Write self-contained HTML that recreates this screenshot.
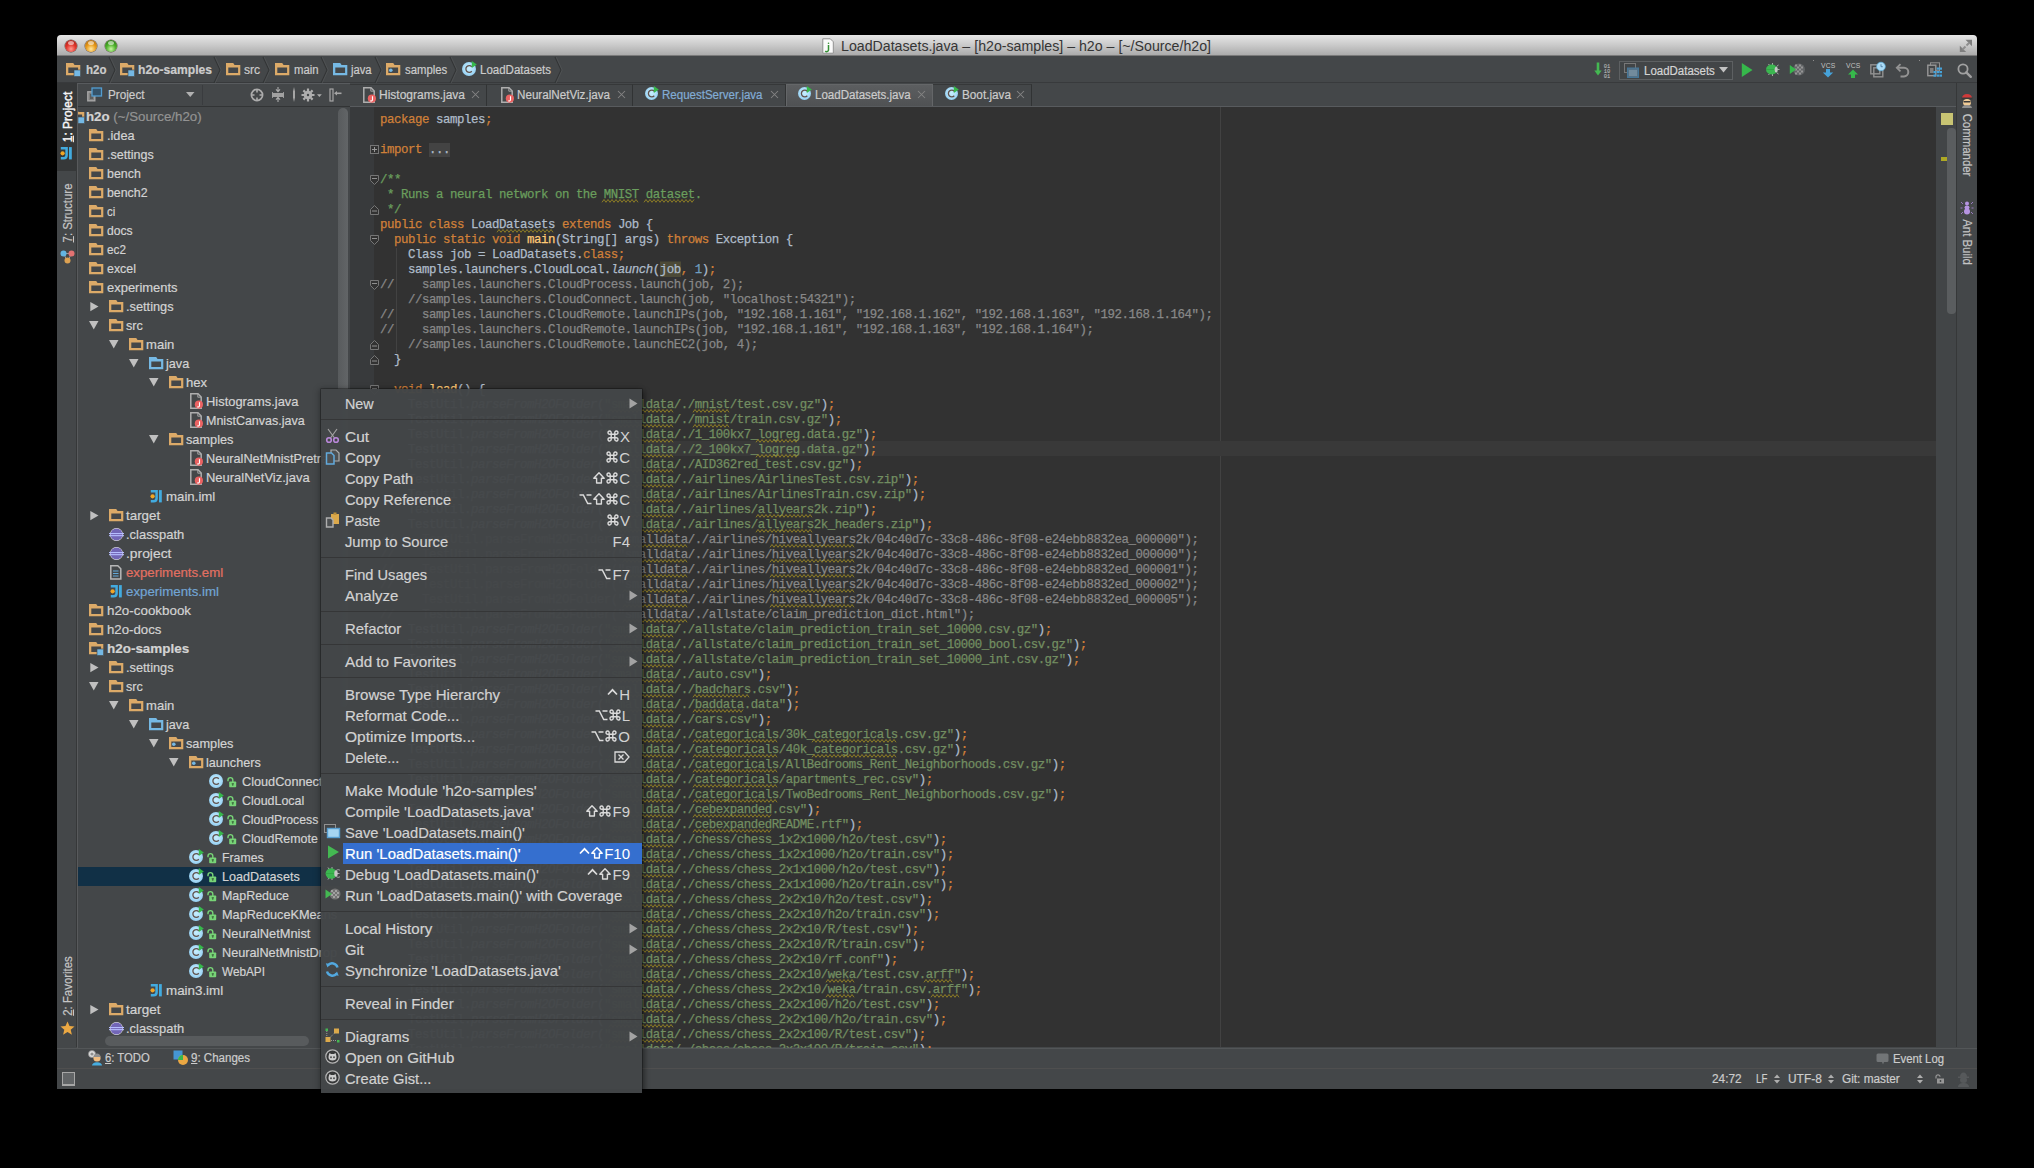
<!DOCTYPE html><html><head><meta charset="utf-8"><style>
*{margin:0;padding:0;box-sizing:border-box}
html,body{width:2034px;height:1168px;background:#000000;overflow:hidden;position:relative;font-family:"Liberation Sans",sans-serif}
.b{position:absolute}
.ic{position:absolute;overflow:visible}
.t{position:absolute;white-space:nowrap;line-height:0;transform-origin:0 50%;-webkit-text-stroke:0.2px currentColor}
.tr{position:absolute;white-space:nowrap;line-height:0;font-size:12.9px;color:#d3d3d3;-webkit-text-stroke:0.2px currentColor}
.mi{position:absolute;white-space:nowrap;line-height:0;font-size:15px;color:#cdcdcd;-webkit-text-stroke:0.2px currentColor}
.clip{position:absolute;overflow:hidden}
.cl{position:absolute;left:0;white-space:pre;font-family:"Liberation Mono",monospace;font-size:12.4px;letter-spacing:-0.44px;line-height:15px;height:15px;color:#afbcca;-webkit-text-stroke:0.25px currentColor}
.k{color:#d08039}.i{color:#afbcca}.s{color:#728e61}.c{color:#888888}.d{color:#6a9e5d}.n{color:#709ec0}.f{color:#ffca75}
.it{font-style:italic}
.hl{background:#4C4A37;box-shadow:0 -1.5px 0 #4C4A37}
.fold{color:#afbcca;background:#434343}
.sq{}
</style></head><body>
<div class="b" style="left:57px;top:35px;width:1920px;height:1054px;background:#444749;border-radius:5px 5px 0 0"></div>
<div class="b" style="left:57px;top:35px;width:1920px;height:21px;background:linear-gradient(#E6E6E6,#CACACA 50%,#ABABAB);border-radius:4px 4px 0 0;border-bottom:1px solid #7A7A7A"></div>
<div class="b" style="left:65px;top:40px;width:12px;height:12px;border-radius:50%;background:radial-gradient(circle at 50% 75%,#FF9A90,#E0342A 45%,#8E1A12 100%);box-shadow:0 0 0 0.5px rgba(40,10,0,0.6)"></div>
<div class="b" style="left:68px;top:41px;width:6px;height:4px;border-radius:50%;background:rgba(255,255,255,0.55)"></div>
<div class="b" style="left:85px;top:40px;width:12px;height:12px;border-radius:50%;background:radial-gradient(circle at 50% 75%,#FFE9A0,#E89A1A 45%,#9A5A08 100%);box-shadow:0 0 0 0.5px rgba(40,10,0,0.6)"></div>
<div class="b" style="left:88px;top:41px;width:6px;height:4px;border-radius:50%;background:rgba(255,255,255,0.55)"></div>
<div class="b" style="left:105px;top:40px;width:12px;height:12px;border-radius:50%;background:radial-gradient(circle at 50% 75%,#C8F7A0,#4CB02A 45%,#22640E 100%);box-shadow:0 0 0 0.5px rgba(40,10,0,0.6)"></div>
<div class="b" style="left:108px;top:41px;width:6px;height:4px;border-radius:50%;background:rgba(255,255,255,0.55)"></div>
<svg class="ic" style="left:822px;top:38px" width="12" height="16" viewBox="0 0 12 16" ><path d="M0.8 0.8h7.5l3 3v11.4H0.8z" fill="#fafafa" stroke="#919191" stroke-width="1"/><path d="M6.5 7v5.2a1.8 1.8 0 0 1-3.2 0.8" fill="none" stroke="#359135" stroke-width="1.5"/><circle cx="6.5" cy="5.2" r="0.8" fill="#359135"/></svg>
<div class="t" style="left:840.5px;top:46px;font-size:14px;font-weight:normal;color:#353535;transform:scaleX(1.0126);-webkit-text-stroke:0">LoadDatasets.java – [h2o-samples] – h2o – [~/Source/h2o]</div>
<svg class="ic" style="left:1959px;top:39px" width="14" height="14" viewBox="0 0 14 14" ><path d="M6.5 0.8H13V7.2z" fill="#7f7f7f"/><path d="M10.5 3.5L7.5 6.5" stroke="#8f8f8f" stroke-width="2"/><path d="M0.8 6.8V13H7.2z" fill="#7f7f7f"/><path d="M3.5 10.5L6.5 7.5" stroke="#8f8f8f" stroke-width="2"/></svg>
<div class="b" style="left:57px;top:56px;width:1920px;height:27px;background:#444749;border-bottom:1px solid #383a3c"></div>
<svg class="ic" style="left:66px;top:63px" width="15" height="14" viewBox="0 0 15 14" ><path fill-rule="evenodd" d="M0 0H7.2L8.6 2H14.3V12.3H0Z M2.3 4.4H12.1V9.9H2.3Z" fill="#DCAA68"/><rect x="8" y="7" width="6.5" height="6.5" fill="#74B8E4" stroke="#444749" stroke-width="0.6"/></svg>
<div class="t" style="left:85.5px;top:70px;font-size:12px;font-weight:bold;color:#cccccc;transform:scaleX(0.9609);">h2o</div>
<svg class="ic" style="left:108px;top:57px" width="9" height="26" viewBox="0 0 9 26" ><path d="M1 0L7 13L1 26" fill="none" stroke="#333536" stroke-width="1.1"/><path d="M2.2 0L8.2 13L2.2 26" fill="none" stroke="#535658" stroke-width="0.7"/></svg>
<svg class="ic" style="left:120px;top:63px" width="15" height="14" viewBox="0 0 15 14" ><path fill-rule="evenodd" d="M0 0H7.2L8.6 2H14.3V12.3H0Z M2.3 4.4H12.1V9.9H2.3Z" fill="#DCAA68"/><rect x="8" y="7" width="6.5" height="6.5" fill="#74B8E4" stroke="#444749" stroke-width="0.6"/></svg>
<div class="t" style="left:138px;top:70px;font-size:12px;font-weight:bold;color:#cccccc;transform:scaleX(1.0087);">h2o-samples</div>
<svg class="ic" style="left:213px;top:57px" width="9" height="26" viewBox="0 0 9 26" ><path d="M1 0L7 13L1 26" fill="none" stroke="#333536" stroke-width="1.1"/><path d="M2.2 0L8.2 13L2.2 26" fill="none" stroke="#535658" stroke-width="0.7"/></svg>
<svg class="ic" style="left:226px;top:63px" width="15" height="14" viewBox="0 0 15 14" ><path fill-rule="evenodd" d="M0 0H7.2L8.6 2H14.3V12.3H0Z M2.3 4.4H12.1V9.9H2.3Z" fill="#DCAA68"/></svg>
<div class="t" style="left:244px;top:70px;font-size:12px;font-weight:normal;color:#cccccc;transform:scaleX(1.0127);">src</div>
<svg class="ic" style="left:262px;top:57px" width="9" height="26" viewBox="0 0 9 26" ><path d="M1 0L7 13L1 26" fill="none" stroke="#333536" stroke-width="1.1"/><path d="M2.2 0L8.2 13L2.2 26" fill="none" stroke="#535658" stroke-width="0.7"/></svg>
<svg class="ic" style="left:275px;top:63px" width="15" height="14" viewBox="0 0 15 14" ><path fill-rule="evenodd" d="M0 0H7.2L8.6 2H14.3V12.3H0Z M2.3 4.4H12.1V9.9H2.3Z" fill="#DCAA68"/></svg>
<div class="t" style="left:293.5px;top:70px;font-size:12px;font-weight:normal;color:#cccccc;transform:scaleX(0.9420);">main</div>
<svg class="ic" style="left:320px;top:57px" width="9" height="26" viewBox="0 0 9 26" ><path d="M1 0L7 13L1 26" fill="none" stroke="#333536" stroke-width="1.1"/><path d="M2.2 0L8.2 13L2.2 26" fill="none" stroke="#535658" stroke-width="0.7"/></svg>
<svg class="ic" style="left:333px;top:63px" width="15" height="14" viewBox="0 0 15 14" ><path fill-rule="evenodd" d="M0 0H7.2L8.6 2H14.3V12.3H0Z M2.3 4.4H12.1V9.9H2.3Z" fill="#76B9E4"/></svg>
<div class="t" style="left:351px;top:70px;font-size:12px;font-weight:normal;color:#cccccc;transform:scaleX(0.9358);">java</div>
<svg class="ic" style="left:374px;top:57px" width="9" height="26" viewBox="0 0 9 26" ><path d="M1 0L7 13L1 26" fill="none" stroke="#333536" stroke-width="1.1"/><path d="M2.2 0L8.2 13L2.2 26" fill="none" stroke="#535658" stroke-width="0.7"/></svg>
<svg class="ic" style="left:386px;top:63px" width="15" height="14" viewBox="0 0 15 14" ><path fill-rule="evenodd" d="M0 0H7.2L8.6 2H14.3V12.3H0Z M2.3 4.4H12.1V9.9H2.3Z" fill="#DCAA68"/><circle cx="4.8" cy="7.2" r="1.8" fill="#74B8E4"/></svg>
<div class="t" style="left:404.7px;top:70px;font-size:12px;font-weight:normal;color:#cccccc;transform:scaleX(0.9467);">samples</div>
<svg class="ic" style="left:449px;top:57px" width="9" height="26" viewBox="0 0 9 26" ><path d="M1 0L7 13L1 26" fill="none" stroke="#333536" stroke-width="1.1"/><path d="M2.2 0L8.2 13L2.2 26" fill="none" stroke="#535658" stroke-width="0.7"/></svg>
<svg class="ic" style="left:462px;top:61px" width="15" height="16" viewBox="0 0 15 16" ><defs><radialGradient id="cg" cx="50%" cy="45%" r="55%"><stop offset="0" stop-color="#c8eeff"/><stop offset="0.6" stop-color="#aedff9"/><stop offset="1" stop-color="#93cef1"/></radialGradient></defs><circle cx="7.0" cy="8.0" r="7.0" fill="url(#cg)"/><path d="M9.8 5.7A3.4 3.4 0 1 0 9.8 10.3" fill="none" stroke="#62524d" stroke-width="1.3"/><path d="M9.8 0 L14.8 3.5 L9.8 7z" fill="#36b84b"/></svg>
<div class="t" style="left:480.4px;top:70px;font-size:12px;font-weight:normal;color:#cccccc;transform:scaleX(0.9588);">LoadDatasets</div>
<svg class="ic" style="left:554px;top:57px" width="9" height="26" viewBox="0 0 9 26" ><path d="M1 0L7 13L1 26" fill="none" stroke="#333536" stroke-width="1.1"/><path d="M2.2 0L8.2 13L2.2 26" fill="none" stroke="#535658" stroke-width="0.7"/></svg>
<svg class="ic" style="left:1594px;top:62px" width="17" height="16" viewBox="0 0 17 16" ><path d="M4 0.5v9" stroke="#44b852" stroke-width="2.6"/><path d="M0.3 8.5h7.4L4 13.5z" fill="#44b852"/><text x="13" y="5.5" font-size="5.5" text-anchor="middle" fill="#c5c5c5" font-family="Liberation Mono">01</text><text x="13" y="10.5" font-size="5.5" text-anchor="middle" fill="#c5c5c5" font-family="Liberation Mono">10</text><text x="13" y="15.5" font-size="5.5" text-anchor="middle" fill="#c5c5c5" font-family="Liberation Mono">01</text></svg>
<div class="b" style="left:1619px;top:61px;width:114px;height:19px;border:1px solid #5d6062;background:#424547"></div>
<svg class="ic" style="left:1624px;top:63px" width="16" height="16" viewBox="0 0 16 16" ><rect x="0.5" y="0.5" width="11" height="9" fill="none" stroke="#787878"/><rect x="3.5" y="5" width="11" height="9.5" fill="#557288" stroke="#467697"/><rect x="5" y="7" width="8" height="6" fill="#728b9d"/></svg>
<div class="t" style="left:1643.5px;top:70.5px;font-size:12px;font-weight:normal;color:#d4d4d4;transform:scaleX(0.9561);">LoadDatasets</div>
<svg class="ic" style="left:1719px;top:67px" width="9" height="6" viewBox="0 0 9 6" ><path d="M0 0h9L4.5 5.5z" fill="#c2c2c2"/></svg>
<svg class="ic" style="left:1741px;top:63px" width="12" height="15" viewBox="0 0 12 15" ><path d="M0.8 0L11.5 7 0.8 14z" fill="#36b84b"/></svg>
<svg class="ic" style="left:1765px;top:62px" width="15" height="15" viewBox="0 0 15 15" ><path d="M3.5 2L5 4M7.5 1v2.5M3.5 13L5 11M7.5 14v-2.5M11.5 4.5l2-1.5M11.5 10.5l2 1.5M12.5 7.5h2" stroke="#b6b6b6" stroke-width="0.9" fill="none"/><ellipse cx="6.8" cy="7.5" rx="5.8" ry="5" fill="#3bb750"/><path d="M1 7.5h10" stroke="#319642" stroke-width="0.6"/><ellipse cx="11.2" cy="7.5" rx="1.6" ry="2.8" fill="#c5c5c5"/></svg>
<svg class="ic" style="left:1789px;top:62px" width="16" height="15" viewBox="0 0 16 15" ><circle cx="10" cy="7.5" r="6" fill="#626567"/><g fill="#959595"><rect x="6" y="2.5" width="2" height="2"/><rect x="10" y="2.5" width="2" height="2"/><rect x="8" y="4.5" width="2" height="2"/><rect x="12" y="4.5" width="2" height="2"/><rect x="6" y="6.5" width="2" height="2"/><rect x="10" y="6.5" width="2" height="2"/><rect x="8" y="8.5" width="2" height="2"/><rect x="12" y="8.5" width="2" height="2"/><rect x="6" y="10.5" width="2" height="2"/><rect x="10" y="10.5" width="2" height="2"/></g><path d="M0.8 3L7 7.5 0.8 12z" fill="#36b84b"/></svg>
<div class="b" style="left:1813px;top:60px;width:1px;height:1px;background:#8f8f8f"></div>
<div class="b" style="left:1919px;top:60px;width:1px;height:1px;background:#8f8f8f"></div>
<svg class="ic" style="left:1820.5px;top:62px" width="15" height="17" viewBox="0 0 15 17" ><text x="7.3" y="6.2" font-size="6.8" text-anchor="middle" fill="#c2c2c2" font-family="Liberation Sans" letter-spacing="0.2">VCS</text><path d="M5 7h4v4H5z M1.8 10.5h10.4L7 15.5z" fill="#46a2d9"/></svg>
<svg class="ic" style="left:1845.5px;top:62px" width="15" height="17" viewBox="0 0 15 17" ><text x="7.3" y="6.2" font-size="6.8" text-anchor="middle" fill="#c2c2c2" font-family="Liberation Sans" letter-spacing="0.2">VCS</text><path d="M2 12.5h10L7 7.5z M5 12.5h4V16H5z" fill="#36b84b"/></svg>
<svg class="ic" style="left:1870px;top:62px" width="16" height="16" viewBox="0 0 16 16" ><rect x="0.8" y="2.8" width="9" height="9" fill="none" stroke="#919191" stroke-width="1.4"/><rect x="3.8" y="5.8" width="9" height="9" fill="none" stroke="#919191" stroke-width="1.4"/><circle cx="11" cy="4.5" r="4.3" fill="#abdbf6" stroke="#62b4e2" stroke-width="0.7"/><path d="M11 2.3v2.4h1.8" stroke="#427297" stroke-width="0.8" fill="none"/></svg>
<svg class="ic" style="left:1896px;top:63px" width="14" height="15" viewBox="0 0 14 15" ><path d="M4.5 1.2L0.8 4.8l3.7 3.6" fill="none" stroke="#939393" stroke-width="1.8"/><path d="M1.5 4.8h6.5a4.3 4.3 0 0 1 0 8.6H4.5" fill="none" stroke="#939393" stroke-width="2"/></svg>
<svg class="ic" style="left:1927px;top:62px" width="15" height="16" viewBox="0 0 15 16" ><rect x="3.5" y="0.8" width="9" height="8" fill="none" stroke="#8f8f8f" stroke-width="1"/><rect x="0.8" y="3.2" width="8" height="10.5" fill="#444749" stroke="#979797" stroke-width="1.4"/><rect x="3" y="6" width="3.5" height="5" fill="#7f7f7f"/><g fill="#46a2d9"><rect x="6.5" y="9" width="2.6" height="2.2"/><rect x="6.5" y="12.5" width="2.6" height="2.2"/><rect x="9.8" y="5.5" width="2.6" height="2.2"/><rect x="9.8" y="9" width="2.6" height="2.2"/><rect x="9.8" y="12.5" width="2.6" height="2.2"/><rect x="12.6" y="5.5" width="2.4" height="2.2"/><rect x="12.6" y="9" width="2.4" height="2.2"/><rect x="12.6" y="12.5" width="2.4" height="2.2"/></g></svg>
<svg class="ic" style="left:1957px;top:63px" width="15" height="15" viewBox="0 0 15 15" ><circle cx="6" cy="6" r="4.6" fill="none" stroke="#a1a1a1" stroke-width="1.8"/><path d="M9.3 9.3l4.5 4.5" stroke="#a1a1a1" stroke-width="2.4" stroke-linecap="round"/></svg>
<div class="b" style="left:57px;top:83px;width:20px;height:964px;background:#444749;border-right:1px solid #363839"></div>
<div class="b" style="left:57px;top:83px;width:20px;height:88px;background:#363839"></div>
<div style="position:absolute;left:67.5px;top:117.3px;transform:translate(-50%,-50%) rotate(-90deg) scaleX(0.98);white-space:nowrap;font-size:12.2px;color:#f5f5f5;line-height:1;-webkit-text-stroke:0.45px currentColor"><u>1</u>: Project</div>
<svg class="ic" style="left:60px;top:147px" width="13" height="13" viewBox="0 0 13 13" ><path d="M0.8 1.3H6.6V8.2Q6.6 11.2 3.6 11.2H0.8" fill="none" stroke="#42abdf" stroke-width="2.5"/><circle cx="2.6" cy="6.3" r="2.1" fill="#f1a626"/><rect x="9" y="0.1" width="2.8" height="12.3" fill="#42abdf"/></svg>
<div style="position:absolute;left:67.5px;top:212.5px;transform:translate(-50%,-50%) rotate(-90deg) scaleX(0.95);white-space:nowrap;font-size:12px;color:#c5c5c5;line-height:1;-webkit-text-stroke:0.2px currentColor"><u>7</u>: Structure</div>
<svg class="ic" style="left:60px;top:249px" width="15" height="15" viewBox="0 0 15 15" ><path d="M3.5 4.5L7.5 12.5L11.5 4.5z" fill="none" stroke="#a1a1a1" stroke-width="0.9"/><circle cx="3.5" cy="4.5" r="3" fill="#62b4e2"/><circle cx="11.5" cy="4.5" r="3" fill="#e27272"/><circle cx="7.5" cy="11.5" r="3" fill="#dca152"/></svg>
<div style="position:absolute;left:67.5px;top:986px;transform:translate(-50%,-50%) rotate(-90deg) scaleX(0.95);white-space:nowrap;font-size:12px;color:#c5c5c5;line-height:1;-webkit-text-stroke:0.2px currentColor"><u>2</u>: Favorites</div>
<svg class="ic" style="left:60px;top:1021px" width="15" height="15" viewBox="0 0 15 15" ><path d="M7.5 0.5l2 4.6 5 .4-3.8 3.3 1.2 4.9-4.4-2.6-4.4 2.6 1.2-4.9L0.5 5.5l5-.4z" fill="#eba843"/></svg>
<div class="b" style="left:77px;top:83px;width:273px;height:24px;background:#444749;border-bottom:1px solid #323435"></div>
<div class="b" style="left:77px;top:107px;width:263px;height:940px;background:#444749"></div>
<div class="t" style="left:107.5px;top:95px;font-size:12px;font-weight:normal;color:#cccccc;transform:scaleX(0.9773);">Project</div>
<svg class="ic" style="left:87px;top:87px" width="15" height="15" viewBox="0 0 15 15" ><rect x="0.8" y="4.8" width="7" height="9" fill="#7f7f7f" stroke="#a6a6a6" stroke-width="1.4"/><rect x="3" y="7" width="3" height="5" fill="#5d5d5d"/><rect x="5" y="1" width="9.5" height="8" fill="#35536a" stroke="#539dd0" stroke-width="1.3"/></svg>
<svg class="ic" style="left:186px;top:92px" width="9" height="6" viewBox="0 0 9 6" ><path d="M0 0h8.5l-4.25 5z" fill="#b1b1b1"/></svg>
<div class="b" style="left:202px;top:85px;width:1px;height:20px;background:#3a3c3f"></div>
<div class="b" style="left:77px;top:83px;width:273px;height:1px;background:#585b5e"></div>
<svg class="ic" style="left:250px;top:88px" width="14" height="14" viewBox="0 0 14 14" ><circle cx="7" cy="7" r="5.6" fill="none" stroke="#acacac" stroke-width="1.7"/><path d="M7 1.5v3M7 9.5v3M1.5 7h3M9.5 7h3" stroke="#acacac" stroke-width="1.6"/></svg>
<svg class="ic" style="left:272px;top:87px" width="13" height="15" viewBox="0 0 13 15" ><rect x="0.5" y="6" width="11" height="4" fill="#a1a1a1"/><path d="M0.5 5v6M11.5 5v6" stroke="#acacac" stroke-width="0.8"/><path d="M6 0v4M4 2.3L6 4.6 8 2.3M6 15v-4M4 12.7L6 10.4 8 12.7" stroke="#acacac" stroke-width="1.1" fill="none"/></svg>
<div class="b" style="left:293px;top:87px;width:2px;height:15px;background:linear-gradient(#444749,#a6a6a6 30%,#a6a6a6 70%,#444749)"></div>
<svg class="ic" style="left:301px;top:88px" width="22" height="14" viewBox="0 0 22 14" ><path d="M7 0.5v2.5M7 11v2.5M0.5 7h2.5M11 7h2.5M2.4 2.4l1.8 1.8M9.8 9.8l1.8 1.8M2.4 11.6l1.8-1.8M9.8 4.2l1.8-1.8" stroke="#aeaeae" stroke-width="2.2"/><circle cx="7" cy="7" r="4.3" fill="#aeaeae"/><circle cx="7" cy="7" r="1.2" fill="#444749"/><path d="M16 6.3h4.8l-2.4 2.6z" fill="#aeaeae"/></svg>
<svg class="ic" style="left:329px;top:88px" width="14" height="14" viewBox="0 0 14 14" ><rect x="1" y="1" width="3" height="12" fill="none" stroke="#a6a6a6" stroke-width="1.2"/><path d="M5 5.3l3-2.2v4.4z" fill="#a6a6a6"/><path d="M7.5 5.3h5" stroke="#a6a6a6" stroke-width="1.6"/></svg>
<div class="b" style="left:336px;top:107px;width:14px;height:940px;background:#444749"></div>
<div class="b" style="left:337.5px;top:108px;width:10.5px;height:600px;background:linear-gradient(90deg,#585b5d,#626567);border-radius:5px"></div>
<div class="clip" style="left:77px;top:107px;width:263px;height:940px">
<div class="b" style="left:1px;top:759.5px;width:262px;height:19px;background:#113046"></div>
<div class="b" style="left:-77px;top:-107px;width:2034px;height:1168px">
<svg class="ic" style="left:69.7px;top:110px" width="15" height="14" viewBox="0 0 15 14" ><path fill-rule="evenodd" d="M0 0H7.2L8.6 2H14.3V12.3H0Z M2.3 4.4H12.1V9.9H2.3Z" fill="#DCAA68"/><rect x="8" y="7" width="6.5" height="6.5" fill="#74B8E4" stroke="#444749" stroke-width="0.6"/></svg>
<div class="tr" style="left:86px;top:117px;transform:scaleX(1.0310);transform-origin:0 50%;"><b>h2o</b> <span style="color:#939393">(~/Source/h2o)</span></div>
<svg class="ic" style="left:88.7px;top:129px" width="15" height="14" viewBox="0 0 15 14" ><path fill-rule="evenodd" d="M0 0H7.2L8.6 2H14.3V12.3H0Z M2.3 4.4H12.1V9.9H2.3Z" fill="#DCAA68"/></svg>
<div class="tr" style="left:107px;top:136px;transform:scaleX(0.9874);transform-origin:0 50%;">.idea</div>
<svg class="ic" style="left:88.7px;top:148px" width="15" height="14" viewBox="0 0 15 14" ><path fill-rule="evenodd" d="M0 0H7.2L8.6 2H14.3V12.3H0Z M2.3 4.4H12.1V9.9H2.3Z" fill="#DCAA68"/></svg>
<div class="tr" style="left:107px;top:155px;transform:scaleX(0.9728);transform-origin:0 50%;">.settings</div>
<svg class="ic" style="left:88.7px;top:167px" width="15" height="14" viewBox="0 0 15 14" ><path fill-rule="evenodd" d="M0 0H7.2L8.6 2H14.3V12.3H0Z M2.3 4.4H12.1V9.9H2.3Z" fill="#DCAA68"/></svg>
<div class="tr" style="left:107px;top:174px;transform:scaleX(0.9624);transform-origin:0 50%;">bench</div>
<svg class="ic" style="left:88.7px;top:186px" width="15" height="14" viewBox="0 0 15 14" ><path fill-rule="evenodd" d="M0 0H7.2L8.6 2H14.3V12.3H0Z M2.3 4.4H12.1V9.9H2.3Z" fill="#DCAA68"/></svg>
<div class="tr" style="left:107px;top:193px;transform:scaleX(0.9576);transform-origin:0 50%;">bench2</div>
<svg class="ic" style="left:88.7px;top:205px" width="15" height="14" viewBox="0 0 15 14" ><path fill-rule="evenodd" d="M0 0H7.2L8.6 2H14.3V12.3H0Z M2.3 4.4H12.1V9.9H2.3Z" fill="#DCAA68"/></svg>
<div class="tr" style="left:107px;top:212px;transform:scaleX(0.8916);transform-origin:0 50%;">ci</div>
<svg class="ic" style="left:88.7px;top:224px" width="15" height="14" viewBox="0 0 15 14" ><path fill-rule="evenodd" d="M0 0H7.2L8.6 2H14.3V12.3H0Z M2.3 4.4H12.1V9.9H2.3Z" fill="#DCAA68"/></svg>
<div class="tr" style="left:107px;top:231px;transform:scaleX(0.9402);transform-origin:0 50%;">docs</div>
<svg class="ic" style="left:88.7px;top:243px" width="15" height="14" viewBox="0 0 15 14" ><path fill-rule="evenodd" d="M0 0H7.2L8.6 2H14.3V12.3H0Z M2.3 4.4H12.1V9.9H2.3Z" fill="#DCAA68"/></svg>
<div class="tr" style="left:107px;top:250px;transform:scaleX(0.9094);transform-origin:0 50%;">ec2</div>
<svg class="ic" style="left:88.7px;top:262px" width="15" height="14" viewBox="0 0 15 14" ><path fill-rule="evenodd" d="M0 0H7.2L8.6 2H14.3V12.3H0Z M2.3 4.4H12.1V9.9H2.3Z" fill="#DCAA68"/></svg>
<div class="tr" style="left:107px;top:269px;transform:scaleX(0.9604);transform-origin:0 50%;">excel</div>
<svg class="ic" style="left:88.7px;top:281px" width="15" height="14" viewBox="0 0 15 14" ><path fill-rule="evenodd" d="M0 0H7.2L8.6 2H14.3V12.3H0Z M2.3 4.4H12.1V9.9H2.3Z" fill="#DCAA68"/></svg>
<div class="tr" style="left:107px;top:288px;transform:scaleX(1.0055);transform-origin:0 50%;">experiments</div>
<svg class="ic" style="left:89.7px;top:302px" width="9" height="10" viewBox="0 0 9 10" ><path d="M0.3 0L8.5 4.6L0.3 9.3z" fill="#C0C0C0"/></svg>
<svg class="ic" style="left:108.7px;top:300px" width="15" height="14" viewBox="0 0 15 14" ><path fill-rule="evenodd" d="M0 0H7.2L8.6 2H14.3V12.3H0Z M2.3 4.4H12.1V9.9H2.3Z" fill="#DCAA68"/></svg>
<div class="tr" style="left:126px;top:307px;transform:scaleX(0.9915);transform-origin:0 50%;">.settings</div>
<svg class="ic" style="left:88.8px;top:321.2px" width="10" height="9" viewBox="0 0 10 9" ><path d="M0 0H9.5L4.75 8.5z" fill="#C0C0C0"/></svg>
<svg class="ic" style="left:108.7px;top:319px" width="15" height="14" viewBox="0 0 15 14" ><path fill-rule="evenodd" d="M0 0H7.2L8.6 2H14.3V12.3H0Z M2.3 4.4H12.1V9.9H2.3Z" fill="#DCAA68"/></svg>
<div class="tr" style="left:126px;top:326px;transform:scaleX(0.9777);transform-origin:0 50%;">src</div>
<svg class="ic" style="left:108.8px;top:340.2px" width="10" height="9" viewBox="0 0 10 9" ><path d="M0 0H9.5L4.75 8.5z" fill="#C0C0C0"/></svg>
<svg class="ic" style="left:128.7px;top:338px" width="15" height="14" viewBox="0 0 15 14" ><path fill-rule="evenodd" d="M0 0H7.2L8.6 2H14.3V12.3H0Z M2.3 4.4H12.1V9.9H2.3Z" fill="#DCAA68"/></svg>
<div class="tr" style="left:146px;top:345px;transform:scaleX(1.0129);transform-origin:0 50%;">main</div>
<svg class="ic" style="left:128.8px;top:359.2px" width="10" height="9" viewBox="0 0 10 9" ><path d="M0 0H9.5L4.75 8.5z" fill="#C0C0C0"/></svg>
<svg class="ic" style="left:148.7px;top:357px" width="15" height="14" viewBox="0 0 15 14" ><path fill-rule="evenodd" d="M0 0H7.2L8.6 2H14.3V12.3H0Z M2.3 4.4H12.1V9.9H2.3Z" fill="#76B9E4"/></svg>
<div class="tr" style="left:166px;top:364px;transform:scaleX(0.9811);transform-origin:0 50%;">java</div>
<svg class="ic" style="left:148.8px;top:378.2px" width="10" height="9" viewBox="0 0 10 9" ><path d="M0 0H9.5L4.75 8.5z" fill="#C0C0C0"/></svg>
<svg class="ic" style="left:168.7px;top:376px" width="15" height="14" viewBox="0 0 15 14" ><path fill-rule="evenodd" d="M0 0H7.2L8.6 2H14.3V12.3H0Z M2.3 4.4H12.1V9.9H2.3Z" fill="#DCAA68"/></svg>
<div class="tr" style="left:186px;top:383px;transform:scaleX(1.0152);transform-origin:0 50%;">hex</div>
<svg class="ic" style="left:190px;top:393px" width="14" height="16" viewBox="0 0 14 16" ><path d="M0.8 0.8h7.2l3.2 3.2V15.2H0.8z" fill="none" stroke="#aeaeae" stroke-width="1.5"/><path d="M7.8 0.8v3.4h3.4" fill="none" stroke="#aeaeae" stroke-width="0.9"/><circle cx="8.9" cy="11.6" r="4.1" fill="#ea6262"/><path d="M9.5 9.2v3.6a1.3 1.3 0 0 1-2.2 0.8" fill="none" stroke="#ffffff" stroke-width="1.1"/></svg>
<div class="tr" style="left:206px;top:402px;transform:scaleX(1.0009);transform-origin:0 50%;">Histograms.java</div>
<svg class="ic" style="left:190px;top:412px" width="14" height="16" viewBox="0 0 14 16" ><path d="M0.8 0.8h7.2l3.2 3.2V15.2H0.8z" fill="none" stroke="#aeaeae" stroke-width="1.5"/><path d="M7.8 0.8v3.4h3.4" fill="none" stroke="#aeaeae" stroke-width="0.9"/><circle cx="8.9" cy="11.6" r="4.1" fill="#ea6262"/><path d="M9.5 9.2v3.6a1.3 1.3 0 0 1-2.2 0.8" fill="none" stroke="#ffffff" stroke-width="1.1"/></svg>
<div class="tr" style="left:206px;top:421px;transform:scaleX(0.9702);transform-origin:0 50%;">MnistCanvas.java</div>
<svg class="ic" style="left:148.8px;top:435.2px" width="10" height="9" viewBox="0 0 10 9" ><path d="M0 0H9.5L4.75 8.5z" fill="#C0C0C0"/></svg>
<svg class="ic" style="left:168.7px;top:433px" width="15" height="14" viewBox="0 0 15 14" ><path fill-rule="evenodd" d="M0 0H7.2L8.6 2H14.3V12.3H0Z M2.3 4.4H12.1V9.9H2.3Z" fill="#DCAA68"/></svg>
<div class="tr" style="left:186px;top:440px;transform:scaleX(0.9875);transform-origin:0 50%;">samples</div>
<svg class="ic" style="left:190px;top:450px" width="14" height="16" viewBox="0 0 14 16" ><path d="M0.8 0.8h7.2l3.2 3.2V15.2H0.8z" fill="none" stroke="#aeaeae" stroke-width="1.5"/><path d="M7.8 0.8v3.4h3.4" fill="none" stroke="#aeaeae" stroke-width="0.9"/><circle cx="8.9" cy="11.6" r="4.1" fill="#ea6262"/><path d="M9.5 9.2v3.6a1.3 1.3 0 0 1-2.2 0.8" fill="none" stroke="#ffffff" stroke-width="1.1"/></svg>
<div class="tr" style="left:206px;top:459px;transform:scaleX(0.9850);transform-origin:0 50%;">NeuralNetMnistPretrain.java</div>
<svg class="ic" style="left:190px;top:469px" width="14" height="16" viewBox="0 0 14 16" ><path d="M0.8 0.8h7.2l3.2 3.2V15.2H0.8z" fill="none" stroke="#aeaeae" stroke-width="1.5"/><path d="M7.8 0.8v3.4h3.4" fill="none" stroke="#aeaeae" stroke-width="0.9"/><circle cx="8.9" cy="11.6" r="4.1" fill="#ea6262"/><path d="M9.5 9.2v3.6a1.3 1.3 0 0 1-2.2 0.8" fill="none" stroke="#ffffff" stroke-width="1.1"/></svg>
<div class="tr" style="left:206px;top:478px;transform:scaleX(1.0064);transform-origin:0 50%;">NeuralNetViz.java</div>
<svg class="ic" style="left:150px;top:490px" width="13" height="13" viewBox="0 0 13 13" ><path d="M0.8 1.3H6.6V8.2Q6.6 11.2 3.6 11.2H0.8" fill="none" stroke="#42abdf" stroke-width="2.5"/><circle cx="2.6" cy="6.3" r="2.1" fill="#f1a626"/><rect x="9" y="0.1" width="2.8" height="12.3" fill="#42abdf"/></svg>
<div class="tr" style="left:166px;top:497px;transform:scaleX(1.0274);transform-origin:0 50%;">main.iml</div>
<svg class="ic" style="left:89.7px;top:511px" width="9" height="10" viewBox="0 0 9 10" ><path d="M0.3 0L8.5 4.6L0.3 9.3z" fill="#C0C0C0"/></svg>
<svg class="ic" style="left:108.7px;top:509px" width="15" height="14" viewBox="0 0 15 14" ><path fill-rule="evenodd" d="M0 0H7.2L8.6 2H14.3V12.3H0Z M2.3 4.4H12.1V9.9H2.3Z" fill="#DCAA68"/></svg>
<div class="tr" style="left:126px;top:516px;transform:scaleX(1.0375);transform-origin:0 50%;">target</div>
<svg class="ic" style="left:108.8px;top:528px" width="15" height="13" viewBox="0 0 15 13" ><circle cx="7.5" cy="6.5" r="6.5" fill="#efefef" /><circle cx="7.5" cy="6.5" r="6" fill="#7266b7"/><rect x="0" y="5" width="15" height="1.1" fill="#b6bdff"/><rect x="0" y="7.1" width="15" height="1.1" fill="#b6bdff"/></svg>
<div class="tr" style="left:126px;top:535px;transform:scaleX(1.0045);transform-origin:0 50%;">.classpath</div>
<svg class="ic" style="left:108.8px;top:547px" width="15" height="13" viewBox="0 0 15 13" ><circle cx="7.5" cy="6.5" r="6.5" fill="#efefef" /><circle cx="7.5" cy="6.5" r="6" fill="#7266b7"/><rect x="0" y="5" width="15" height="1.1" fill="#b6bdff"/><rect x="0" y="7.1" width="15" height="1.1" fill="#b6bdff"/></svg>
<div class="tr" style="left:126px;top:554px;transform:scaleX(1.0740);transform-origin:0 50%;">.project</div>
<svg class="ic" style="left:109.8px;top:565px" width="12" height="15" viewBox="0 0 12 15" ><path d="M0.8 0.8h7l3 3V14H0.8z" fill="none" stroke="#b6b6b6" stroke-width="1.5"/><rect x="3" y="5.5" width="5.5" height="1" fill="#63aad9"/><rect x="3" y="8" width="5.5" height="1" fill="#63aad9"/><rect x="3" y="10.5" width="5.5" height="1" fill="#63aad9"/></svg>
<div class="tr" style="left:126px;top:573px;transform:scaleX(1.0279);transform-origin:0 50%;"><span style="color:#e27062;-webkit-text-stroke-color:#e27062">experiments.eml</span></div>
<svg class="ic" style="left:110px;top:585px" width="13" height="13" viewBox="0 0 13 13" ><path d="M0.8 1.3H6.6V8.2Q6.6 11.2 3.6 11.2H0.8" fill="none" stroke="#42abdf" stroke-width="2.5"/><circle cx="2.6" cy="6.3" r="2.1" fill="#f1a626"/><rect x="9" y="0.1" width="2.8" height="12.3" fill="#42abdf"/></svg>
<div class="tr" style="left:126px;top:592px;transform:scaleX(1.0304);transform-origin:0 50%;"><span style="color:#72a5d4;-webkit-text-stroke-color:#72a5d4">experiments.iml</span></div>
<svg class="ic" style="left:88.7px;top:604px" width="15" height="14" viewBox="0 0 15 14" ><path fill-rule="evenodd" d="M0 0H7.2L8.6 2H14.3V12.3H0Z M2.3 4.4H12.1V9.9H2.3Z" fill="#DCAA68"/></svg>
<div class="tr" style="left:107px;top:611px;transform:scaleX(1.0373);transform-origin:0 50%;">h2o-cookbook</div>
<svg class="ic" style="left:88.7px;top:623px" width="15" height="14" viewBox="0 0 15 14" ><path fill-rule="evenodd" d="M0 0H7.2L8.6 2H14.3V12.3H0Z M2.3 4.4H12.1V9.9H2.3Z" fill="#DCAA68"/></svg>
<div class="tr" style="left:107px;top:630px;transform:scaleX(1.0259);transform-origin:0 50%;">h2o-docs</div>
<svg class="ic" style="left:88.7px;top:642px" width="15" height="14" viewBox="0 0 15 14" ><path fill-rule="evenodd" d="M0 0H7.2L8.6 2H14.3V12.3H0Z M2.3 4.4H12.1V9.9H2.3Z" fill="#DCAA68"/><rect x="8" y="7" width="6.5" height="6.5" fill="#74B8E4" stroke="#444749" stroke-width="0.6"/></svg>
<div class="tr" style="left:107px;top:649px;transform:scaleX(1.0431);transform-origin:0 50%;"><b>h2o-samples</b></div>
<svg class="ic" style="left:89.7px;top:663px" width="9" height="10" viewBox="0 0 9 10" ><path d="M0.3 0L8.5 4.6L0.3 9.3z" fill="#C0C0C0"/></svg>
<svg class="ic" style="left:108.7px;top:661px" width="15" height="14" viewBox="0 0 15 14" ><path fill-rule="evenodd" d="M0 0H7.2L8.6 2H14.3V12.3H0Z M2.3 4.4H12.1V9.9H2.3Z" fill="#DCAA68"/></svg>
<div class="tr" style="left:126px;top:668px;transform:scaleX(0.9915);transform-origin:0 50%;">.settings</div>
<svg class="ic" style="left:88.8px;top:682.2px" width="10" height="9" viewBox="0 0 10 9" ><path d="M0 0H9.5L4.75 8.5z" fill="#C0C0C0"/></svg>
<svg class="ic" style="left:108.7px;top:680px" width="15" height="14" viewBox="0 0 15 14" ><path fill-rule="evenodd" d="M0 0H7.2L8.6 2H14.3V12.3H0Z M2.3 4.4H12.1V9.9H2.3Z" fill="#DCAA68"/></svg>
<div class="tr" style="left:126px;top:687px;transform:scaleX(0.9777);transform-origin:0 50%;">src</div>
<svg class="ic" style="left:108.8px;top:701.2px" width="10" height="9" viewBox="0 0 10 9" ><path d="M0 0H9.5L4.75 8.5z" fill="#C0C0C0"/></svg>
<svg class="ic" style="left:128.7px;top:699px" width="15" height="14" viewBox="0 0 15 14" ><path fill-rule="evenodd" d="M0 0H7.2L8.6 2H14.3V12.3H0Z M2.3 4.4H12.1V9.9H2.3Z" fill="#DCAA68"/></svg>
<div class="tr" style="left:146px;top:706px;transform:scaleX(1.0129);transform-origin:0 50%;">main</div>
<svg class="ic" style="left:128.8px;top:720.2px" width="10" height="9" viewBox="0 0 10 9" ><path d="M0 0H9.5L4.75 8.5z" fill="#C0C0C0"/></svg>
<svg class="ic" style="left:148.7px;top:718px" width="15" height="14" viewBox="0 0 15 14" ><path fill-rule="evenodd" d="M0 0H7.2L8.6 2H14.3V12.3H0Z M2.3 4.4H12.1V9.9H2.3Z" fill="#76B9E4"/></svg>
<div class="tr" style="left:166px;top:725px;transform:scaleX(0.9811);transform-origin:0 50%;">java</div>
<svg class="ic" style="left:148.8px;top:739.2px" width="10" height="9" viewBox="0 0 10 9" ><path d="M0 0H9.5L4.75 8.5z" fill="#C0C0C0"/></svg>
<svg class="ic" style="left:168.7px;top:737px" width="15" height="14" viewBox="0 0 15 14" ><path fill-rule="evenodd" d="M0 0H7.2L8.6 2H14.3V12.3H0Z M2.3 4.4H12.1V9.9H2.3Z" fill="#DCAA68"/><circle cx="4.8" cy="7.2" r="1.8" fill="#74B8E4"/></svg>
<div class="tr" style="left:186px;top:744px;transform:scaleX(0.9875);transform-origin:0 50%;">samples</div>
<svg class="ic" style="left:168.8px;top:758.2px" width="10" height="9" viewBox="0 0 10 9" ><path d="M0 0H9.5L4.75 8.5z" fill="#C0C0C0"/></svg>
<svg class="ic" style="left:188.7px;top:756px" width="15" height="14" viewBox="0 0 15 14" ><path fill-rule="evenodd" d="M0 0H7.2L8.6 2H14.3V12.3H0Z M2.3 4.4H12.1V9.9H2.3Z" fill="#DCAA68"/><circle cx="4.8" cy="7.2" r="1.8" fill="#74B8E4"/></svg>
<div class="tr" style="left:206px;top:763px;transform:scaleX(0.9787);transform-origin:0 50%;">launchers</div>
<svg class="ic" style="left:208.8px;top:773px" width="15" height="16" viewBox="0 0 15 16" ><defs><radialGradient id="cg" cx="50%" cy="45%" r="55%"><stop offset="0" stop-color="#c8eeff"/><stop offset="0.6" stop-color="#aedff9"/><stop offset="1" stop-color="#93cef1"/></radialGradient></defs><circle cx="7.0" cy="8.0" r="7.0" fill="url(#cg)"/><path d="M9.8 5.7A3.4 3.4 0 1 0 9.8 10.3" fill="none" stroke="#62524d" stroke-width="1.3"/></svg>
<svg class="ic" style="left:226.5px;top:776.5px" width="10" height="11" viewBox="0 0 10 11" ><path d="M1 4.2V3a2.4 2.4 0 0 1 4.8 0v2" fill="none" stroke="#77d477" stroke-width="1.4"/><rect x="2.2" y="4.4" width="7" height="5.8" rx="0.8" fill="#77d477"/><path d="M4.7 6.8h2.2M5.8 6.8v2" stroke="#315231" stroke-width="0.9"/></svg>
<div class="tr" style="left:242px;top:782px;transform:scaleX(0.9850);transform-origin:0 50%;">CloudConnect</div>
<svg class="ic" style="left:208.8px;top:792px" width="15" height="16" viewBox="0 0 15 16" ><defs><radialGradient id="cg" cx="50%" cy="45%" r="55%"><stop offset="0" stop-color="#c8eeff"/><stop offset="0.6" stop-color="#aedff9"/><stop offset="1" stop-color="#93cef1"/></radialGradient></defs><circle cx="7.0" cy="8.0" r="7.0" fill="url(#cg)"/><path d="M9.8 5.7A3.4 3.4 0 1 0 9.8 10.3" fill="none" stroke="#62524d" stroke-width="1.3"/><path d="M9.8 0 L14.8 3.5 L9.8 7z" fill="#36b84b"/></svg>
<svg class="ic" style="left:226.5px;top:795.5px" width="10" height="11" viewBox="0 0 10 11" ><path d="M1 4.2V3a2.4 2.4 0 0 1 4.8 0v2" fill="none" stroke="#77d477" stroke-width="1.4"/><rect x="2.2" y="4.4" width="7" height="5.8" rx="0.8" fill="#77d477"/><path d="M4.7 6.8h2.2M5.8 6.8v2" stroke="#315231" stroke-width="0.9"/></svg>
<div class="tr" style="left:242px;top:801px;transform:scaleX(0.9644);transform-origin:0 50%;">CloudLocal</div>
<svg class="ic" style="left:208.8px;top:811px" width="15" height="16" viewBox="0 0 15 16" ><defs><radialGradient id="cg" cx="50%" cy="45%" r="55%"><stop offset="0" stop-color="#c8eeff"/><stop offset="0.6" stop-color="#aedff9"/><stop offset="1" stop-color="#93cef1"/></radialGradient></defs><circle cx="7.0" cy="8.0" r="7.0" fill="url(#cg)"/><path d="M9.8 5.7A3.4 3.4 0 1 0 9.8 10.3" fill="none" stroke="#62524d" stroke-width="1.3"/><path d="M9.8 0 L14.8 3.5 L9.8 7z" fill="#36b84b"/></svg>
<svg class="ic" style="left:226.5px;top:814.5px" width="10" height="11" viewBox="0 0 10 11" ><path d="M1 4.2V3a2.4 2.4 0 0 1 4.8 0v2" fill="none" stroke="#77d477" stroke-width="1.4"/><rect x="2.2" y="4.4" width="7" height="5.8" rx="0.8" fill="#77d477"/><path d="M4.7 6.8h2.2M5.8 6.8v2" stroke="#315231" stroke-width="0.9"/></svg>
<div class="tr" style="left:242px;top:820px;transform:scaleX(0.9508);transform-origin:0 50%;">CloudProcess</div>
<svg class="ic" style="left:208.8px;top:830px" width="15" height="16" viewBox="0 0 15 16" ><defs><radialGradient id="cg" cx="50%" cy="45%" r="55%"><stop offset="0" stop-color="#c8eeff"/><stop offset="0.6" stop-color="#aedff9"/><stop offset="1" stop-color="#93cef1"/></radialGradient></defs><circle cx="7.0" cy="8.0" r="7.0" fill="url(#cg)"/><path d="M9.8 5.7A3.4 3.4 0 1 0 9.8 10.3" fill="none" stroke="#62524d" stroke-width="1.3"/><path d="M9.8 0 L14.8 3.5 L9.8 7z" fill="#36b84b"/></svg>
<svg class="ic" style="left:226.5px;top:833.5px" width="10" height="11" viewBox="0 0 10 11" ><path d="M1 4.2V3a2.4 2.4 0 0 1 4.8 0v2" fill="none" stroke="#77d477" stroke-width="1.4"/><rect x="2.2" y="4.4" width="7" height="5.8" rx="0.8" fill="#77d477"/><path d="M4.7 6.8h2.2M5.8 6.8v2" stroke="#315231" stroke-width="0.9"/></svg>
<div class="tr" style="left:242px;top:839px;transform:scaleX(0.9617);transform-origin:0 50%;">CloudRemote</div>
<svg class="ic" style="left:188.8px;top:849px" width="15" height="16" viewBox="0 0 15 16" ><defs><radialGradient id="cg" cx="50%" cy="45%" r="55%"><stop offset="0" stop-color="#c8eeff"/><stop offset="0.6" stop-color="#aedff9"/><stop offset="1" stop-color="#93cef1"/></radialGradient></defs><circle cx="7.0" cy="8.0" r="7.0" fill="url(#cg)"/><path d="M9.8 5.7A3.4 3.4 0 1 0 9.8 10.3" fill="none" stroke="#62524d" stroke-width="1.3"/><path d="M9.8 0 L14.8 3.5 L9.8 7z" fill="#36b84b"/></svg>
<svg class="ic" style="left:206.5px;top:852.5px" width="10" height="11" viewBox="0 0 10 11" ><path d="M1 4.2V3a2.4 2.4 0 0 1 4.8 0v2" fill="none" stroke="#77d477" stroke-width="1.4"/><rect x="2.2" y="4.4" width="7" height="5.8" rx="0.8" fill="#77d477"/><path d="M4.7 6.8h2.2M5.8 6.8v2" stroke="#315231" stroke-width="0.9"/></svg>
<div class="tr" style="left:222px;top:858px;transform:scaleX(0.9545);transform-origin:0 50%;">Frames</div>
<svg class="ic" style="left:188.8px;top:868px" width="15" height="16" viewBox="0 0 15 16" ><defs><radialGradient id="cg" cx="50%" cy="45%" r="55%"><stop offset="0" stop-color="#c8eeff"/><stop offset="0.6" stop-color="#aedff9"/><stop offset="1" stop-color="#93cef1"/></radialGradient></defs><circle cx="7.0" cy="8.0" r="7.0" fill="url(#cg)"/><path d="M9.8 5.7A3.4 3.4 0 1 0 9.8 10.3" fill="none" stroke="#62524d" stroke-width="1.3"/><path d="M9.8 0 L14.8 3.5 L9.8 7z" fill="#36b84b"/></svg>
<svg class="ic" style="left:206.5px;top:871.5px" width="10" height="11" viewBox="0 0 10 11" ><path d="M1 4.2V3a2.4 2.4 0 0 1 4.8 0v2" fill="none" stroke="#77d477" stroke-width="1.4"/><rect x="2.2" y="4.4" width="7" height="5.8" rx="0.8" fill="#77d477"/><path d="M4.7 6.8h2.2M5.8 6.8v2" stroke="#315231" stroke-width="0.9"/></svg>
<div class="tr" style="left:222px;top:877px;transform:scaleX(0.9768);transform-origin:0 50%;">LoadDatasets</div>
<svg class="ic" style="left:188.8px;top:887px" width="15" height="16" viewBox="0 0 15 16" ><defs><radialGradient id="cg" cx="50%" cy="45%" r="55%"><stop offset="0" stop-color="#c8eeff"/><stop offset="0.6" stop-color="#aedff9"/><stop offset="1" stop-color="#93cef1"/></radialGradient></defs><circle cx="7.0" cy="8.0" r="7.0" fill="url(#cg)"/><path d="M9.8 5.7A3.4 3.4 0 1 0 9.8 10.3" fill="none" stroke="#62524d" stroke-width="1.3"/><path d="M9.8 0 L14.8 3.5 L9.8 7z" fill="#36b84b"/></svg>
<svg class="ic" style="left:206.5px;top:890.5px" width="10" height="11" viewBox="0 0 10 11" ><path d="M1 4.2V3a2.4 2.4 0 0 1 4.8 0v2" fill="none" stroke="#77d477" stroke-width="1.4"/><rect x="2.2" y="4.4" width="7" height="5.8" rx="0.8" fill="#77d477"/><path d="M4.7 6.8h2.2M5.8 6.8v2" stroke="#315231" stroke-width="0.9"/></svg>
<div class="tr" style="left:222px;top:896px;transform:scaleX(0.9639);transform-origin:0 50%;">MapReduce</div>
<svg class="ic" style="left:188.8px;top:906px" width="15" height="16" viewBox="0 0 15 16" ><defs><radialGradient id="cg" cx="50%" cy="45%" r="55%"><stop offset="0" stop-color="#c8eeff"/><stop offset="0.6" stop-color="#aedff9"/><stop offset="1" stop-color="#93cef1"/></radialGradient></defs><circle cx="7.0" cy="8.0" r="7.0" fill="url(#cg)"/><path d="M9.8 5.7A3.4 3.4 0 1 0 9.8 10.3" fill="none" stroke="#62524d" stroke-width="1.3"/><path d="M9.8 0 L14.8 3.5 L9.8 7z" fill="#36b84b"/></svg>
<svg class="ic" style="left:206.5px;top:909.5px" width="10" height="11" viewBox="0 0 10 11" ><path d="M1 4.2V3a2.4 2.4 0 0 1 4.8 0v2" fill="none" stroke="#77d477" stroke-width="1.4"/><rect x="2.2" y="4.4" width="7" height="5.8" rx="0.8" fill="#77d477"/><path d="M4.7 6.8h2.2M5.8 6.8v2" stroke="#315231" stroke-width="0.9"/></svg>
<div class="tr" style="left:222px;top:915px;transform:scaleX(0.9850);transform-origin:0 50%;">MapReduceKMeans</div>
<svg class="ic" style="left:188.8px;top:925px" width="15" height="16" viewBox="0 0 15 16" ><defs><radialGradient id="cg" cx="50%" cy="45%" r="55%"><stop offset="0" stop-color="#c8eeff"/><stop offset="0.6" stop-color="#aedff9"/><stop offset="1" stop-color="#93cef1"/></radialGradient></defs><circle cx="7.0" cy="8.0" r="7.0" fill="url(#cg)"/><path d="M9.8 5.7A3.4 3.4 0 1 0 9.8 10.3" fill="none" stroke="#62524d" stroke-width="1.3"/><path d="M9.8 0 L14.8 3.5 L9.8 7z" fill="#36b84b"/></svg>
<svg class="ic" style="left:206.5px;top:928.5px" width="10" height="11" viewBox="0 0 10 11" ><path d="M1 4.2V3a2.4 2.4 0 0 1 4.8 0v2" fill="none" stroke="#77d477" stroke-width="1.4"/><rect x="2.2" y="4.4" width="7" height="5.8" rx="0.8" fill="#77d477"/><path d="M4.7 6.8h2.2M5.8 6.8v2" stroke="#315231" stroke-width="0.9"/></svg>
<div class="tr" style="left:222px;top:934px;transform:scaleX(0.9951);transform-origin:0 50%;">NeuralNetMnist</div>
<svg class="ic" style="left:188.8px;top:944px" width="15" height="16" viewBox="0 0 15 16" ><defs><radialGradient id="cg" cx="50%" cy="45%" r="55%"><stop offset="0" stop-color="#c8eeff"/><stop offset="0.6" stop-color="#aedff9"/><stop offset="1" stop-color="#93cef1"/></radialGradient></defs><circle cx="7.0" cy="8.0" r="7.0" fill="url(#cg)"/><path d="M9.8 5.7A3.4 3.4 0 1 0 9.8 10.3" fill="none" stroke="#62524d" stroke-width="1.3"/><path d="M9.8 0 L14.8 3.5 L9.8 7z" fill="#36b84b"/></svg>
<svg class="ic" style="left:206.5px;top:947.5px" width="10" height="11" viewBox="0 0 10 11" ><path d="M1 4.2V3a2.4 2.4 0 0 1 4.8 0v2" fill="none" stroke="#77d477" stroke-width="1.4"/><rect x="2.2" y="4.4" width="7" height="5.8" rx="0.8" fill="#77d477"/><path d="M4.7 6.8h2.2M5.8 6.8v2" stroke="#315231" stroke-width="0.9"/></svg>
<div class="tr" style="left:222px;top:953px;transform:scaleX(0.9850);transform-origin:0 50%;">NeuralNetMnistDrop</div>
<svg class="ic" style="left:188.8px;top:963px" width="15" height="16" viewBox="0 0 15 16" ><defs><radialGradient id="cg" cx="50%" cy="45%" r="55%"><stop offset="0" stop-color="#c8eeff"/><stop offset="0.6" stop-color="#aedff9"/><stop offset="1" stop-color="#93cef1"/></radialGradient></defs><circle cx="7.0" cy="8.0" r="7.0" fill="url(#cg)"/><path d="M9.8 5.7A3.4 3.4 0 1 0 9.8 10.3" fill="none" stroke="#62524d" stroke-width="1.3"/><path d="M9.8 0 L14.8 3.5 L9.8 7z" fill="#36b84b"/></svg>
<svg class="ic" style="left:206.5px;top:966.5px" width="10" height="11" viewBox="0 0 10 11" ><path d="M1 4.2V3a2.4 2.4 0 0 1 4.8 0v2" fill="none" stroke="#77d477" stroke-width="1.4"/><rect x="2.2" y="4.4" width="7" height="5.8" rx="0.8" fill="#77d477"/><path d="M4.7 6.8h2.2M5.8 6.8v2" stroke="#315231" stroke-width="0.9"/></svg>
<div class="tr" style="left:222px;top:972px;transform:scaleX(0.9139);transform-origin:0 50%;">WebAPI</div>
<svg class="ic" style="left:150px;top:984px" width="13" height="13" viewBox="0 0 13 13" ><path d="M0.8 1.3H6.6V8.2Q6.6 11.2 3.6 11.2H0.8" fill="none" stroke="#42abdf" stroke-width="2.5"/><circle cx="2.6" cy="6.3" r="2.1" fill="#f1a626"/><rect x="9" y="0.1" width="2.8" height="12.3" fill="#42abdf"/></svg>
<div class="tr" style="left:166px;top:991px;transform:scaleX(1.0370);transform-origin:0 50%;">main3.iml</div>
<svg class="ic" style="left:89.7px;top:1005px" width="9" height="10" viewBox="0 0 9 10" ><path d="M0.3 0L8.5 4.6L0.3 9.3z" fill="#C0C0C0"/></svg>
<svg class="ic" style="left:108.7px;top:1003px" width="15" height="14" viewBox="0 0 15 14" ><path fill-rule="evenodd" d="M0 0H7.2L8.6 2H14.3V12.3H0Z M2.3 4.4H12.1V9.9H2.3Z" fill="#DCAA68"/></svg>
<div class="tr" style="left:126px;top:1010px;transform:scaleX(1.0466);transform-origin:0 50%;">target</div>
<svg class="ic" style="left:108.8px;top:1022px" width="15" height="13" viewBox="0 0 15 13" ><circle cx="7.5" cy="6.5" r="6.5" fill="#efefef" /><circle cx="7.5" cy="6.5" r="6" fill="#7266b7"/><rect x="0" y="5" width="15" height="1.1" fill="#b6bdff"/><rect x="0" y="7.1" width="15" height="1.1" fill="#b6bdff"/></svg>
<div class="tr" style="left:126px;top:1029px;transform:scaleX(1.0028);transform-origin:0 50%;">.classpath</div>
</div>
<div class="b" style="left:28px;top:929px;width:204px;height:10px;background:#585b5d;border-radius:5px"></div>
</div>
<div class="b" style="left:350px;top:83px;width:1606px;height:24px;background:#444749;border-bottom:1px solid #323232"></div>
<div class="b" style="left:350px;top:84px;width:137px;height:22px;background:#444749;border-right:1px solid #313334;border-top:1px solid #363839"></div>
<svg class="ic" style="left:363px;top:87px" width="14" height="16" viewBox="0 0 14 16" ><path d="M0.8 0.8h7.2l3.2 3.2V15.2H0.8z" fill="none" stroke="#aeaeae" stroke-width="1.5"/><path d="M7.8 0.8v3.4h3.4" fill="none" stroke="#aeaeae" stroke-width="0.9"/><circle cx="8.9" cy="11.6" r="4.1" fill="#ea6262"/><path d="M9.5 9.2v3.6a1.3 1.3 0 0 1-2.2 0.8" fill="none" stroke="#ffffff" stroke-width="1.1"/></svg>
<div class="t" style="left:379px;top:95px;font-size:12px;font-weight:normal;color:#cccccc;transform:scaleX(0.9997);">Histograms.java</div>
<svg class="ic" style="left:471px;top:90px" width="9" height="9" viewBox="0 0 9 9" ><path d="M1 1l7 7M8 1L1 8" stroke="#848484" stroke-width="1.05"/></svg>
<div class="b" style="left:487px;top:84px;width:146px;height:22px;background:#444749;border-right:1px solid #313334;border-top:1px solid #363839"></div>
<svg class="ic" style="left:501px;top:87px" width="14" height="16" viewBox="0 0 14 16" ><path d="M0.8 0.8h7.2l3.2 3.2V15.2H0.8z" fill="none" stroke="#aeaeae" stroke-width="1.5"/><path d="M7.8 0.8v3.4h3.4" fill="none" stroke="#aeaeae" stroke-width="0.9"/><circle cx="8.9" cy="11.6" r="4.1" fill="#ea6262"/><path d="M9.5 9.2v3.6a1.3 1.3 0 0 1-2.2 0.8" fill="none" stroke="#ffffff" stroke-width="1.1"/></svg>
<div class="t" style="left:517px;top:95px;font-size:12px;font-weight:normal;color:#cccccc;transform:scaleX(0.9705);">NeuralNetViz.java</div>
<svg class="ic" style="left:617px;top:90px" width="9" height="9" viewBox="0 0 9 9" ><path d="M1 1l7 7M8 1L1 8" stroke="#848484" stroke-width="1.05"/></svg>
<div class="b" style="left:633px;top:84px;width:153px;height:22px;background:#444749;border-right:1px solid #313334;border-top:1px solid #363839"></div>
<svg class="ic" style="left:645px;top:86px" width="14" height="15" viewBox="0 0 14 15" ><defs><radialGradient id="cg" cx="50%" cy="45%" r="55%"><stop offset="0" stop-color="#c8eeff"/><stop offset="0.6" stop-color="#aedff9"/><stop offset="1" stop-color="#93cef1"/></radialGradient></defs><circle cx="6.5" cy="7.5" r="6.5" fill="url(#cg)"/><path d="M9.3 5.2A3.4 3.4 0 1 0 9.3 9.8" fill="none" stroke="#62524d" stroke-width="1.3"/><path d="M8.8 0 L13.8 3.5 L8.8 7z" fill="#36b84b"/></svg>
<div class="t" style="left:662px;top:95px;font-size:12px;font-weight:normal;color:#82acd5;transform:scaleX(0.9597);">RequestServer.java</div>
<svg class="ic" style="left:770px;top:90px" width="9" height="9" viewBox="0 0 9 9" ><path d="M1 1l7 7M8 1L1 8" stroke="#848484" stroke-width="1.05"/></svg>
<div class="b" style="left:786px;top:84px;width:147px;height:23px;background:linear-gradient(#5c5e60,#4f5153);border:1px solid #646668;border-bottom:0"></div>
<svg class="ic" style="left:798px;top:86px" width="14" height="15" viewBox="0 0 14 15" ><defs><radialGradient id="cg" cx="50%" cy="45%" r="55%"><stop offset="0" stop-color="#c8eeff"/><stop offset="0.6" stop-color="#aedff9"/><stop offset="1" stop-color="#93cef1"/></radialGradient></defs><circle cx="6.5" cy="7.5" r="6.5" fill="url(#cg)"/><path d="M9.3 5.2A3.4 3.4 0 1 0 9.3 9.8" fill="none" stroke="#62524d" stroke-width="1.3"/><path d="M8.8 0 L13.8 3.5 L8.8 7z" fill="#36b84b"/></svg>
<div class="t" style="left:815px;top:95px;font-size:12px;font-weight:normal;color:#cccccc;transform:scaleX(0.9628);">LoadDatasets.java</div>
<svg class="ic" style="left:917px;top:90px" width="9" height="9" viewBox="0 0 9 9" ><path d="M1 1l7 7M8 1L1 8" stroke="#848484" stroke-width="1.05"/></svg>
<div class="b" style="left:933px;top:84px;width:99px;height:22px;background:#444749;border-right:1px solid #313334;border-top:1px solid #363839"></div>
<svg class="ic" style="left:945px;top:86px" width="14" height="15" viewBox="0 0 14 15" ><defs><radialGradient id="cg" cx="50%" cy="45%" r="55%"><stop offset="0" stop-color="#c8eeff"/><stop offset="0.6" stop-color="#aedff9"/><stop offset="1" stop-color="#93cef1"/></radialGradient></defs><circle cx="6.5" cy="7.5" r="6.5" fill="url(#cg)"/><path d="M9.3 5.2A3.4 3.4 0 1 0 9.3 9.8" fill="none" stroke="#62524d" stroke-width="1.3"/><path d="M8.8 0 L13.8 3.5 L8.8 7z" fill="#36b84b"/></svg>
<div class="t" style="left:962px;top:95px;font-size:12px;font-weight:normal;color:#cccccc;transform:scaleX(0.9793);">Boot.java</div>
<svg class="ic" style="left:1016px;top:90px" width="9" height="9" viewBox="0 0 9 9" ><path d="M1 1l7 7M8 1L1 8" stroke="#848484" stroke-width="1.05"/></svg>
<div class="b" style="left:350px;top:106px;width:1606px;height:941px;background:#323232;border-top:1px solid #585b5e"></div>
<div class="b" style="left:350px;top:107px;width:24px;height:940px;background:#383a3c"></div>
<div class="b" style="left:1220px;top:107px;width:1px;height:940px;background:#424242"></div>
<div class="b" style="left:374px;top:441px;width:1562px;height:15px;background:#393939"></div>
<div class="b" style="left:396px;top:248px;width:1px;height:105px;background:#424242"></div>
<div class="b" style="left:1936px;top:107px;width:20px;height:940px;background:#424547"></div>
<div class="b" style="left:1941px;top:113px;width:12px;height:12px;background:#c8c473"></div>
<div class="b" style="left:1947px;top:128px;width:9px;height:186px;background:#5a5d5f;border-radius:4px"></div>
<div class="b" style="left:1941px;top:157px;width:6px;height:4px;background:#aea924"></div>
<div class="clip" style="left:380px;top:107px;width:1556px;height:940.5px"><div class="b" style="left:0;top:-107px">
<div class="cl" style="top:112.7px"><span class="k">package</span><span class="i"> samples</span><span class="k">;</span></div>
<div class="cl" style="top:142.7px"><span class="k">import</span><span class="i"> </span><span class="fold">...</span></div>
<div class="cl" style="top:172.7px"><span class="d">/**</span></div>
<div class="cl" style="top:187.7px"><span class="d"> * Runs a neural network on the </span><span class="d sq">MNIST</span><span class="d"> </span><span class="d sq">dataset</span><span class="d">.</span></div>
<div class="cl" style="top:202.7px"><span class="d"> */</span></div>
<div class="cl" style="top:217.7px"><span class="k">public class </span><span class="i">Load</span><span class="i sq">Datasets</span><span class="k"> extends </span><span class="i">Job {</span></div>
<div class="cl" style="top:232.7px"><span class="k">  public static void </span><span class="f">main</span><span class="i">(String[] args) </span><span class="k">throws </span><span class="i">Exception {</span></div>
<div class="cl" style="top:247.7px"><span class="i">    Class job = LoadDatasets.</span><span class="k">class</span><span class="k">;</span></div>
<div class="cl" style="top:262.7px"><span class="i">    samples.launchers.CloudLocal.</span><span class="i it">launch</span><span class="i">(</span><span class="i hl">job</span><span class="k">, </span><span class="n">1</span><span class="i">)</span><span class="k">;</span></div>
<div class="cl" style="top:277.7px"><span class="c">//    samples.launchers.CloudProcess.launch(job, 2);</span></div>
<div class="cl" style="top:292.7px"><span class="c">    //samples.launchers.CloudConnect.launch(job, "localhost:54321");</span></div>
<div class="cl" style="top:307.7px"><span class="c">//    samples.launchers.CloudRemote.launchIPs(job, "192.168.1.161", "192.168.1.162", "192.168.1.163", "192.168.1.164");</span></div>
<div class="cl" style="top:322.7px"><span class="c">//    samples.launchers.CloudRemote.launchIPs(job, "192.168.1.161", "192.168.1.163", "192.168.1.164");</span></div>
<div class="cl" style="top:337.7px"><span class="c">    //samples.launchers.CloudRemote.launchEC2(job, 4);</span></div>
<div class="cl" style="top:352.7px"><span class="i">  }</span></div>
<div class="cl" style="top:382.7px"><span class="k">  void </span><span class="f">load</span><span class="i">() {</span></div>
<div class="cl" style="top:397.7px"><span class="i">    TestUtil.</span><span class="i it">parseFromH2OFolder</span><span class="i">(</span><span class="s">"</span><span class="s sq">smalldata</span><span class="s">/./</span><span class="s sq">mnist</span><span class="s">/test.csv.gz</span><span class="s">"</span><span class="i">)</span><span class="k">;</span></div>
<div class="cl" style="top:412.7px"><span class="i">    TestUtil.</span><span class="i it">parseFromH2OFolder</span><span class="i">(</span><span class="s">"</span><span class="s sq">smalldata</span><span class="s">/./</span><span class="s sq">mnist</span><span class="s">/train.csv.gz</span><span class="s">"</span><span class="i">)</span><span class="k">;</span></div>
<div class="cl" style="top:427.7px"><span class="i">    TestUtil.</span><span class="i it">parseFromH2OFolder</span><span class="i">(</span><span class="s">"</span><span class="s sq">smalldata</span><span class="s">/./</span><span class="s">1_100kx7_</span><span class="s sq">logreg</span><span class="s">.data.gz</span><span class="s">"</span><span class="i">)</span><span class="k">;</span></div>
<div class="cl" style="top:442.7px"><span class="i">    TestUtil.</span><span class="i it">parseFromH2OFolder</span><span class="i">(</span><span class="s">"</span><span class="s sq">smalldata</span><span class="s">/./</span><span class="s">2_100kx7_</span><span class="s sq">logreg</span><span class="s">.data.gz</span><span class="s">"</span><span class="i">)</span><span class="k">;</span></div>
<div class="cl" style="top:457.7px"><span class="i">    TestUtil.</span><span class="i it">parseFromH2OFolder</span><span class="i">(</span><span class="s">"</span><span class="s sq">smalldata</span><span class="s">/./</span><span class="s">AID362red_test.csv.gz</span><span class="s">"</span><span class="i">)</span><span class="k">;</span></div>
<div class="cl" style="top:472.7px"><span class="i">    TestUtil.</span><span class="i it">parseFromH2OFolder</span><span class="i">(</span><span class="s">"</span><span class="s sq">smalldata</span><span class="s">/./</span><span class="s">airlines/AirlinesTest.csv.zip</span><span class="s">"</span><span class="i">)</span><span class="k">;</span></div>
<div class="cl" style="top:487.7px"><span class="i">    TestUtil.</span><span class="i it">parseFromH2OFolder</span><span class="i">(</span><span class="s">"</span><span class="s sq">smalldata</span><span class="s">/./</span><span class="s">airlines/AirlinesTrain.csv.zip</span><span class="s">"</span><span class="i">)</span><span class="k">;</span></div>
<div class="cl" style="top:502.7px"><span class="i">    TestUtil.</span><span class="i it">parseFromH2OFolder</span><span class="i">(</span><span class="s">"</span><span class="s sq">smalldata</span><span class="s">/./</span><span class="s">airlines/</span><span class="s sq">allyears</span><span class="s">2k.zip</span><span class="s">"</span><span class="i">)</span><span class="k">;</span></div>
<div class="cl" style="top:517.7px"><span class="i">    TestUtil.</span><span class="i it">parseFromH2OFolder</span><span class="i">(</span><span class="s">"</span><span class="s sq">smalldata</span><span class="s">/./</span><span class="s">airlines/</span><span class="s sq">allyears</span><span class="s">2k_headers.zip</span><span class="s">"</span><span class="i">)</span><span class="k">;</span></div>
<div class="cl" style="top:532.7px"><span class="c">//    TestUtil.parseFromH2OFolder("</span><span class="c sq">smalldata</span><span class="c">/./</span><span class="c">airlines/</span><span class="c sq">hiveallyears</span><span class="c">2k/04c40d7c-33c8-486c-8f08-e24ebb8832ea_000000</span><span class="c">");</span></div>
<div class="cl" style="top:547.7px"><span class="c">//    TestUtil.parseFromH2OFolder("</span><span class="c sq">smalldata</span><span class="c">/./</span><span class="c">airlines/</span><span class="c sq">hiveallyears</span><span class="c">2k/04c40d7c-33c8-486c-8f08-e24ebb8832ed_000000</span><span class="c">");</span></div>
<div class="cl" style="top:562.7px"><span class="c">//    TestUtil.parseFromH2OFolder("</span><span class="c sq">smalldata</span><span class="c">/./</span><span class="c">airlines/</span><span class="c sq">hiveallyears</span><span class="c">2k/04c40d7c-33c8-486c-8f08-e24ebb8832ed_000001</span><span class="c">");</span></div>
<div class="cl" style="top:577.7px"><span class="c">//    TestUtil.parseFromH2OFolder("</span><span class="c sq">smalldata</span><span class="c">/./</span><span class="c">airlines/</span><span class="c sq">hiveallyears</span><span class="c">2k/04c40d7c-33c8-486c-8f08-e24ebb8832ed_000002</span><span class="c">");</span></div>
<div class="cl" style="top:592.7px"><span class="c">//    TestUtil.parseFromH2OFolder("</span><span class="c sq">smalldata</span><span class="c">/./</span><span class="c">airlines/</span><span class="c sq">hiveallyears</span><span class="c">2k/04c40d7c-33c8-486c-8f08-e24ebb8832ed_000005</span><span class="c">");</span></div>
<div class="cl" style="top:607.7px"><span class="c">//    TestUtil.parseFromH2OFolder("</span><span class="c sq">smalldata</span><span class="c">/./</span><span class="c">allstate/claim_prediction_dict.html</span><span class="c">");</span></div>
<div class="cl" style="top:622.7px"><span class="i">    TestUtil.</span><span class="i it">parseFromH2OFolder</span><span class="i">(</span><span class="s">"</span><span class="s sq">smalldata</span><span class="s">/./</span><span class="s">allstate/claim_prediction_train_set_10000.csv.gz</span><span class="s">"</span><span class="i">)</span><span class="k">;</span></div>
<div class="cl" style="top:637.7px"><span class="i">    TestUtil.</span><span class="i it">parseFromH2OFolder</span><span class="i">(</span><span class="s">"</span><span class="s sq">smalldata</span><span class="s">/./</span><span class="s">allstate/claim_prediction_train_set_10000_bool.csv.gz</span><span class="s">"</span><span class="i">)</span><span class="k">;</span></div>
<div class="cl" style="top:652.7px"><span class="i">    TestUtil.</span><span class="i it">parseFromH2OFolder</span><span class="i">(</span><span class="s">"</span><span class="s sq">smalldata</span><span class="s">/./</span><span class="s">allstate/claim_prediction_train_set_10000_int.csv.gz</span><span class="s">"</span><span class="i">)</span><span class="k">;</span></div>
<div class="cl" style="top:667.7px"><span class="i">    TestUtil.</span><span class="i it">parseFromH2OFolder</span><span class="i">(</span><span class="s">"</span><span class="s sq">smalldata</span><span class="s">/./</span><span class="s">auto.csv</span><span class="s">"</span><span class="i">)</span><span class="k">;</span></div>
<div class="cl" style="top:682.7px"><span class="i">    TestUtil.</span><span class="i it">parseFromH2OFolder</span><span class="i">(</span><span class="s">"</span><span class="s sq">smalldata</span><span class="s">/./</span><span class="s sq">badchars</span><span class="s">.csv</span><span class="s">"</span><span class="i">)</span><span class="k">;</span></div>
<div class="cl" style="top:697.7px"><span class="i">    TestUtil.</span><span class="i it">parseFromH2OFolder</span><span class="i">(</span><span class="s">"</span><span class="s sq">smalldata</span><span class="s">/./</span><span class="s sq">baddata</span><span class="s">.data</span><span class="s">"</span><span class="i">)</span><span class="k">;</span></div>
<div class="cl" style="top:712.7px"><span class="i">    TestUtil.</span><span class="i it">parseFromH2OFolder</span><span class="i">(</span><span class="s">"</span><span class="s sq">smalldata</span><span class="s">/./</span><span class="s">cars.csv</span><span class="s">"</span><span class="i">)</span><span class="k">;</span></div>
<div class="cl" style="top:727.7px"><span class="i">    TestUtil.</span><span class="i it">parseFromH2OFolder</span><span class="i">(</span><span class="s">"</span><span class="s sq">smalldata</span><span class="s">/./</span><span class="s sq">categoricals</span><span class="s">/30k_</span><span class="s sq">categoricals</span><span class="s">.csv.gz</span><span class="s">"</span><span class="i">)</span><span class="k">;</span></div>
<div class="cl" style="top:742.7px"><span class="i">    TestUtil.</span><span class="i it">parseFromH2OFolder</span><span class="i">(</span><span class="s">"</span><span class="s sq">smalldata</span><span class="s">/./</span><span class="s sq">categoricals</span><span class="s">/40k_</span><span class="s sq">categoricals</span><span class="s">.csv.gz</span><span class="s">"</span><span class="i">)</span><span class="k">;</span></div>
<div class="cl" style="top:757.7px"><span class="i">    TestUtil.</span><span class="i it">parseFromH2OFolder</span><span class="i">(</span><span class="s">"</span><span class="s sq">smalldata</span><span class="s">/./</span><span class="s sq">categoricals</span><span class="s">/AllBedrooms_Rent_Neighborhoods.csv.gz</span><span class="s">"</span><span class="i">)</span><span class="k">;</span></div>
<div class="cl" style="top:772.7px"><span class="i">    TestUtil.</span><span class="i it">parseFromH2OFolder</span><span class="i">(</span><span class="s">"</span><span class="s sq">smalldata</span><span class="s">/./</span><span class="s sq">categoricals</span><span class="s">/apartments_rec.csv</span><span class="s">"</span><span class="i">)</span><span class="k">;</span></div>
<div class="cl" style="top:787.7px"><span class="i">    TestUtil.</span><span class="i it">parseFromH2OFolder</span><span class="i">(</span><span class="s">"</span><span class="s sq">smalldata</span><span class="s">/./</span><span class="s sq">categoricals</span><span class="s">/TwoBedrooms_Rent_Neighborhoods.csv.gz</span><span class="s">"</span><span class="i">)</span><span class="k">;</span></div>
<div class="cl" style="top:802.7px"><span class="i">    TestUtil.</span><span class="i it">parseFromH2OFolder</span><span class="i">(</span><span class="s">"</span><span class="s sq">smalldata</span><span class="s">/./</span><span class="s sq">cebexpanded</span><span class="s">.csv</span><span class="s">"</span><span class="i">)</span><span class="k">;</span></div>
<div class="cl" style="top:817.7px"><span class="i">    TestUtil.</span><span class="i it">parseFromH2OFolder</span><span class="i">(</span><span class="s">"</span><span class="s sq">smalldata</span><span class="s">/./</span><span class="s sq">cebexpanded</span><span class="s">README.rtf</span><span class="s">"</span><span class="i">)</span><span class="k">;</span></div>
<div class="cl" style="top:832.7px"><span class="i">    TestUtil.</span><span class="i it">parseFromH2OFolder</span><span class="i">(</span><span class="s">"</span><span class="s sq">smalldata</span><span class="s">/./</span><span class="s">chess/chess_1x2x1000/h2o/test.csv</span><span class="s">"</span><span class="i">)</span><span class="k">;</span></div>
<div class="cl" style="top:847.7px"><span class="i">    TestUtil.</span><span class="i it">parseFromH2OFolder</span><span class="i">(</span><span class="s">"</span><span class="s sq">smalldata</span><span class="s">/./</span><span class="s">chess/chess_1x2x1000/h2o/train.csv</span><span class="s">"</span><span class="i">)</span><span class="k">;</span></div>
<div class="cl" style="top:862.7px"><span class="i">    TestUtil.</span><span class="i it">parseFromH2OFolder</span><span class="i">(</span><span class="s">"</span><span class="s sq">smalldata</span><span class="s">/./</span><span class="s">chess/chess_2x1x1000/h2o/test.csv</span><span class="s">"</span><span class="i">)</span><span class="k">;</span></div>
<div class="cl" style="top:877.7px"><span class="i">    TestUtil.</span><span class="i it">parseFromH2OFolder</span><span class="i">(</span><span class="s">"</span><span class="s sq">smalldata</span><span class="s">/./</span><span class="s">chess/chess_2x1x1000/h2o/train.csv</span><span class="s">"</span><span class="i">)</span><span class="k">;</span></div>
<div class="cl" style="top:892.7px"><span class="i">    TestUtil.</span><span class="i it">parseFromH2OFolder</span><span class="i">(</span><span class="s">"</span><span class="s sq">smalldata</span><span class="s">/./</span><span class="s">chess/chess_2x2x10/h2o/test.csv</span><span class="s">"</span><span class="i">)</span><span class="k">;</span></div>
<div class="cl" style="top:907.7px"><span class="i">    TestUtil.</span><span class="i it">parseFromH2OFolder</span><span class="i">(</span><span class="s">"</span><span class="s sq">smalldata</span><span class="s">/./</span><span class="s">chess/chess_2x2x10/h2o/train.csv</span><span class="s">"</span><span class="i">)</span><span class="k">;</span></div>
<div class="cl" style="top:922.7px"><span class="i">    TestUtil.</span><span class="i it">parseFromH2OFolder</span><span class="i">(</span><span class="s">"</span><span class="s sq">smalldata</span><span class="s">/./</span><span class="s">chess/chess_2x2x10/R/test.csv</span><span class="s">"</span><span class="i">)</span><span class="k">;</span></div>
<div class="cl" style="top:937.7px"><span class="i">    TestUtil.</span><span class="i it">parseFromH2OFolder</span><span class="i">(</span><span class="s">"</span><span class="s sq">smalldata</span><span class="s">/./</span><span class="s">chess/chess_2x2x10/R/train.csv</span><span class="s">"</span><span class="i">)</span><span class="k">;</span></div>
<div class="cl" style="top:952.7px"><span class="i">    TestUtil.</span><span class="i it">parseFromH2OFolder</span><span class="i">(</span><span class="s">"</span><span class="s sq">smalldata</span><span class="s">/./</span><span class="s">chess/chess_2x2x10/rf.conf</span><span class="s">"</span><span class="i">)</span><span class="k">;</span></div>
<div class="cl" style="top:967.7px"><span class="i">    TestUtil.</span><span class="i it">parseFromH2OFolder</span><span class="i">(</span><span class="s">"</span><span class="s sq">smalldata</span><span class="s">/./</span><span class="s">chess/chess_2x2x10/</span><span class="s sq">weka</span><span class="s">/test.csv.</span><span class="s sq">arff</span><span class="s">"</span><span class="i">)</span><span class="k">;</span></div>
<div class="cl" style="top:982.7px"><span class="i">    TestUtil.</span><span class="i it">parseFromH2OFolder</span><span class="i">(</span><span class="s">"</span><span class="s sq">smalldata</span><span class="s">/./</span><span class="s">chess/chess_2x2x10/</span><span class="s sq">weka</span><span class="s">/train.csv.</span><span class="s sq">arff</span><span class="s">"</span><span class="i">)</span><span class="k">;</span></div>
<div class="cl" style="top:997.7px"><span class="i">    TestUtil.</span><span class="i it">parseFromH2OFolder</span><span class="i">(</span><span class="s">"</span><span class="s sq">smalldata</span><span class="s">/./</span><span class="s">chess/chess_2x2x100/h2o/test.csv</span><span class="s">"</span><span class="i">)</span><span class="k">;</span></div>
<div class="cl" style="top:1012.7px"><span class="i">    TestUtil.</span><span class="i it">parseFromH2OFolder</span><span class="i">(</span><span class="s">"</span><span class="s sq">smalldata</span><span class="s">/./</span><span class="s">chess/chess_2x2x100/h2o/train.csv</span><span class="s">"</span><span class="i">)</span><span class="k">;</span></div>
<div class="cl" style="top:1027.7px"><span class="i">    TestUtil.</span><span class="i it">parseFromH2OFolder</span><span class="i">(</span><span class="s">"</span><span class="s sq">smalldata</span><span class="s">/./</span><span class="s">chess/chess_2x2x100/R/test.csv</span><span class="s">"</span><span class="i">)</span><span class="k">;</span></div>
<div class="cl" style="top:1042.7px"><span class="i">    TestUtil.</span><span class="i it">parseFromH2OFolder</span><span class="i">(</span><span class="s">"</span><span class="s sq">smalldata</span><span class="s">/./</span><span class="s">chess/chess_2x2x100/R/train.csv</span><span class="s">"</span><span class="i">)</span><span class="k">;</span></div>
<svg class="ic" style="left:222.0px;top:198.5px" width="38" height="4"><polyline points="0.0 3.3 2.0 0.5 4.0 3.3 6.0 0.5 8.0 3.3 10.0 0.5 12.0 3.3 14.0 0.5 16.0 3.3 18.0 0.5 20.0 3.3 22.0 0.5 24.0 3.3 26.0 0.5 28.0 3.3 30.0 0.5 32.0 3.3 34.0 0.5 36.0 3.3" fill="none" stroke="#9d8a24" stroke-width="0.85"/></svg>
<svg class="ic" style="left:264.0px;top:198.5px" width="52" height="4"><polyline points="0.0 3.3 2.0 0.5 4.0 3.3 6.0 0.5 8.0 3.3 10.0 0.5 12.0 3.3 14.0 0.5 16.0 3.3 18.0 0.5 20.0 3.3 22.0 0.5 24.0 3.3 26.0 0.5 28.0 3.3 30.0 0.5 32.0 3.3 34.0 0.5 36.0 3.3 38.0 0.5 40.0 3.3 42.0 0.5 44.0 3.3 46.0 0.5 48.0 3.3 50.0 0.5" fill="none" stroke="#9d8a24" stroke-width="0.85"/></svg>
<svg class="ic" style="left:117.0px;top:228.5px" width="60" height="4"><polyline points="0.0 3.3 2.0 0.5 4.0 3.3 6.0 0.5 8.0 3.3 10.0 0.5 12.0 3.3 14.0 0.5 16.0 3.3 18.0 0.5 20.0 3.3 22.0 0.5 24.0 3.3 26.0 0.5 28.0 3.3 30.0 0.5 32.0 3.3 34.0 0.5 36.0 3.3 38.0 0.5 40.0 3.3 42.0 0.5 44.0 3.3 46.0 0.5 48.0 3.3 50.0 0.5 52.0 3.3 54.0 0.5 56.0 3.3" fill="none" stroke="#9d8a24" stroke-width="0.85"/></svg>
<svg class="ic" style="left:229.0px;top:408.5px" width="66" height="4"><polyline points="0.0 3.3 2.0 0.5 4.0 3.3 6.0 0.5 8.0 3.3 10.0 0.5 12.0 3.3 14.0 0.5 16.0 3.3 18.0 0.5 20.0 3.3 22.0 0.5 24.0 3.3 26.0 0.5 28.0 3.3 30.0 0.5 32.0 3.3 34.0 0.5 36.0 3.3 38.0 0.5 40.0 3.3 42.0 0.5 44.0 3.3 46.0 0.5 48.0 3.3 50.0 0.5 52.0 3.3 54.0 0.5 56.0 3.3 58.0 0.5 60.0 3.3 62.0 0.5 64.0 3.3" fill="none" stroke="#9d8a24" stroke-width="0.85"/></svg>
<svg class="ic" style="left:313.0px;top:408.5px" width="38" height="4"><polyline points="0.0 3.3 2.0 0.5 4.0 3.3 6.0 0.5 8.0 3.3 10.0 0.5 12.0 3.3 14.0 0.5 16.0 3.3 18.0 0.5 20.0 3.3 22.0 0.5 24.0 3.3 26.0 0.5 28.0 3.3 30.0 0.5 32.0 3.3 34.0 0.5 36.0 3.3" fill="none" stroke="#9d8a24" stroke-width="0.85"/></svg>
<svg class="ic" style="left:229.0px;top:423.5px" width="66" height="4"><polyline points="0.0 3.3 2.0 0.5 4.0 3.3 6.0 0.5 8.0 3.3 10.0 0.5 12.0 3.3 14.0 0.5 16.0 3.3 18.0 0.5 20.0 3.3 22.0 0.5 24.0 3.3 26.0 0.5 28.0 3.3 30.0 0.5 32.0 3.3 34.0 0.5 36.0 3.3 38.0 0.5 40.0 3.3 42.0 0.5 44.0 3.3 46.0 0.5 48.0 3.3 50.0 0.5 52.0 3.3 54.0 0.5 56.0 3.3 58.0 0.5 60.0 3.3 62.0 0.5 64.0 3.3" fill="none" stroke="#9d8a24" stroke-width="0.85"/></svg>
<svg class="ic" style="left:313.0px;top:423.5px" width="38" height="4"><polyline points="0.0 3.3 2.0 0.5 4.0 3.3 6.0 0.5 8.0 3.3 10.0 0.5 12.0 3.3 14.0 0.5 16.0 3.3 18.0 0.5 20.0 3.3 22.0 0.5 24.0 3.3 26.0 0.5 28.0 3.3 30.0 0.5 32.0 3.3 34.0 0.5 36.0 3.3" fill="none" stroke="#9d8a24" stroke-width="0.85"/></svg>
<svg class="ic" style="left:229.0px;top:438.5px" width="66" height="4"><polyline points="0.0 3.3 2.0 0.5 4.0 3.3 6.0 0.5 8.0 3.3 10.0 0.5 12.0 3.3 14.0 0.5 16.0 3.3 18.0 0.5 20.0 3.3 22.0 0.5 24.0 3.3 26.0 0.5 28.0 3.3 30.0 0.5 32.0 3.3 34.0 0.5 36.0 3.3 38.0 0.5 40.0 3.3 42.0 0.5 44.0 3.3 46.0 0.5 48.0 3.3 50.0 0.5 52.0 3.3 54.0 0.5 56.0 3.3 58.0 0.5 60.0 3.3 62.0 0.5 64.0 3.3" fill="none" stroke="#9d8a24" stroke-width="0.85"/></svg>
<svg class="ic" style="left:376.0px;top:438.5px" width="46" height="4"><polyline points="0.0 3.3 2.0 0.5 4.0 3.3 6.0 0.5 8.0 3.3 10.0 0.5 12.0 3.3 14.0 0.5 16.0 3.3 18.0 0.5 20.0 3.3 22.0 0.5 24.0 3.3 26.0 0.5 28.0 3.3 30.0 0.5 32.0 3.3 34.0 0.5 36.0 3.3 38.0 0.5 40.0 3.3 42.0 0.5" fill="none" stroke="#9d8a24" stroke-width="0.85"/></svg>
<svg class="ic" style="left:229.0px;top:453.5px" width="66" height="4"><polyline points="0.0 3.3 2.0 0.5 4.0 3.3 6.0 0.5 8.0 3.3 10.0 0.5 12.0 3.3 14.0 0.5 16.0 3.3 18.0 0.5 20.0 3.3 22.0 0.5 24.0 3.3 26.0 0.5 28.0 3.3 30.0 0.5 32.0 3.3 34.0 0.5 36.0 3.3 38.0 0.5 40.0 3.3 42.0 0.5 44.0 3.3 46.0 0.5 48.0 3.3 50.0 0.5 52.0 3.3 54.0 0.5 56.0 3.3 58.0 0.5 60.0 3.3 62.0 0.5 64.0 3.3" fill="none" stroke="#9d8a24" stroke-width="0.85"/></svg>
<svg class="ic" style="left:376.0px;top:453.5px" width="46" height="4"><polyline points="0.0 3.3 2.0 0.5 4.0 3.3 6.0 0.5 8.0 3.3 10.0 0.5 12.0 3.3 14.0 0.5 16.0 3.3 18.0 0.5 20.0 3.3 22.0 0.5 24.0 3.3 26.0 0.5 28.0 3.3 30.0 0.5 32.0 3.3 34.0 0.5 36.0 3.3 38.0 0.5 40.0 3.3 42.0 0.5" fill="none" stroke="#9d8a24" stroke-width="0.85"/></svg>
<svg class="ic" style="left:229.0px;top:468.5px" width="66" height="4"><polyline points="0.0 3.3 2.0 0.5 4.0 3.3 6.0 0.5 8.0 3.3 10.0 0.5 12.0 3.3 14.0 0.5 16.0 3.3 18.0 0.5 20.0 3.3 22.0 0.5 24.0 3.3 26.0 0.5 28.0 3.3 30.0 0.5 32.0 3.3 34.0 0.5 36.0 3.3 38.0 0.5 40.0 3.3 42.0 0.5 44.0 3.3 46.0 0.5 48.0 3.3 50.0 0.5 52.0 3.3 54.0 0.5 56.0 3.3 58.0 0.5 60.0 3.3 62.0 0.5 64.0 3.3" fill="none" stroke="#9d8a24" stroke-width="0.85"/></svg>
<svg class="ic" style="left:229.0px;top:483.5px" width="66" height="4"><polyline points="0.0 3.3 2.0 0.5 4.0 3.3 6.0 0.5 8.0 3.3 10.0 0.5 12.0 3.3 14.0 0.5 16.0 3.3 18.0 0.5 20.0 3.3 22.0 0.5 24.0 3.3 26.0 0.5 28.0 3.3 30.0 0.5 32.0 3.3 34.0 0.5 36.0 3.3 38.0 0.5 40.0 3.3 42.0 0.5 44.0 3.3 46.0 0.5 48.0 3.3 50.0 0.5 52.0 3.3 54.0 0.5 56.0 3.3 58.0 0.5 60.0 3.3 62.0 0.5 64.0 3.3" fill="none" stroke="#9d8a24" stroke-width="0.85"/></svg>
<svg class="ic" style="left:229.0px;top:498.5px" width="66" height="4"><polyline points="0.0 3.3 2.0 0.5 4.0 3.3 6.0 0.5 8.0 3.3 10.0 0.5 12.0 3.3 14.0 0.5 16.0 3.3 18.0 0.5 20.0 3.3 22.0 0.5 24.0 3.3 26.0 0.5 28.0 3.3 30.0 0.5 32.0 3.3 34.0 0.5 36.0 3.3 38.0 0.5 40.0 3.3 42.0 0.5 44.0 3.3 46.0 0.5 48.0 3.3 50.0 0.5 52.0 3.3 54.0 0.5 56.0 3.3 58.0 0.5 60.0 3.3 62.0 0.5 64.0 3.3" fill="none" stroke="#9d8a24" stroke-width="0.85"/></svg>
<svg class="ic" style="left:229.0px;top:513.5px" width="66" height="4"><polyline points="0.0 3.3 2.0 0.5 4.0 3.3 6.0 0.5 8.0 3.3 10.0 0.5 12.0 3.3 14.0 0.5 16.0 3.3 18.0 0.5 20.0 3.3 22.0 0.5 24.0 3.3 26.0 0.5 28.0 3.3 30.0 0.5 32.0 3.3 34.0 0.5 36.0 3.3 38.0 0.5 40.0 3.3 42.0 0.5 44.0 3.3 46.0 0.5 48.0 3.3 50.0 0.5 52.0 3.3 54.0 0.5 56.0 3.3 58.0 0.5 60.0 3.3 62.0 0.5 64.0 3.3" fill="none" stroke="#9d8a24" stroke-width="0.85"/></svg>
<svg class="ic" style="left:376.0px;top:513.5px" width="60" height="4"><polyline points="0.0 3.3 2.0 0.5 4.0 3.3 6.0 0.5 8.0 3.3 10.0 0.5 12.0 3.3 14.0 0.5 16.0 3.3 18.0 0.5 20.0 3.3 22.0 0.5 24.0 3.3 26.0 0.5 28.0 3.3 30.0 0.5 32.0 3.3 34.0 0.5 36.0 3.3 38.0 0.5 40.0 3.3 42.0 0.5 44.0 3.3 46.0 0.5 48.0 3.3 50.0 0.5 52.0 3.3 54.0 0.5 56.0 3.3" fill="none" stroke="#9d8a24" stroke-width="0.85"/></svg>
<svg class="ic" style="left:229.0px;top:528.5px" width="66" height="4"><polyline points="0.0 3.3 2.0 0.5 4.0 3.3 6.0 0.5 8.0 3.3 10.0 0.5 12.0 3.3 14.0 0.5 16.0 3.3 18.0 0.5 20.0 3.3 22.0 0.5 24.0 3.3 26.0 0.5 28.0 3.3 30.0 0.5 32.0 3.3 34.0 0.5 36.0 3.3 38.0 0.5 40.0 3.3 42.0 0.5 44.0 3.3 46.0 0.5 48.0 3.3 50.0 0.5 52.0 3.3 54.0 0.5 56.0 3.3 58.0 0.5 60.0 3.3 62.0 0.5 64.0 3.3" fill="none" stroke="#9d8a24" stroke-width="0.85"/></svg>
<svg class="ic" style="left:376.0px;top:528.5px" width="60" height="4"><polyline points="0.0 3.3 2.0 0.5 4.0 3.3 6.0 0.5 8.0 3.3 10.0 0.5 12.0 3.3 14.0 0.5 16.0 3.3 18.0 0.5 20.0 3.3 22.0 0.5 24.0 3.3 26.0 0.5 28.0 3.3 30.0 0.5 32.0 3.3 34.0 0.5 36.0 3.3 38.0 0.5 40.0 3.3 42.0 0.5 44.0 3.3 46.0 0.5 48.0 3.3 50.0 0.5 52.0 3.3 54.0 0.5 56.0 3.3" fill="none" stroke="#9d8a24" stroke-width="0.85"/></svg>
<svg class="ic" style="left:243.0px;top:543.5px" width="66" height="4"><polyline points="0.0 3.3 2.0 0.5 4.0 3.3 6.0 0.5 8.0 3.3 10.0 0.5 12.0 3.3 14.0 0.5 16.0 3.3 18.0 0.5 20.0 3.3 22.0 0.5 24.0 3.3 26.0 0.5 28.0 3.3 30.0 0.5 32.0 3.3 34.0 0.5 36.0 3.3 38.0 0.5 40.0 3.3 42.0 0.5 44.0 3.3 46.0 0.5 48.0 3.3 50.0 0.5 52.0 3.3 54.0 0.5 56.0 3.3 58.0 0.5 60.0 3.3 62.0 0.5 64.0 3.3" fill="none" stroke="#9d8a24" stroke-width="0.85"/></svg>
<svg class="ic" style="left:390.0px;top:543.5px" width="88" height="4"><polyline points="0.0 3.3 2.0 0.5 4.0 3.3 6.0 0.5 8.0 3.3 10.0 0.5 12.0 3.3 14.0 0.5 16.0 3.3 18.0 0.5 20.0 3.3 22.0 0.5 24.0 3.3 26.0 0.5 28.0 3.3 30.0 0.5 32.0 3.3 34.0 0.5 36.0 3.3 38.0 0.5 40.0 3.3 42.0 0.5 44.0 3.3 46.0 0.5 48.0 3.3 50.0 0.5 52.0 3.3 54.0 0.5 56.0 3.3 58.0 0.5 60.0 3.3 62.0 0.5 64.0 3.3 66.0 0.5 68.0 3.3 70.0 0.5 72.0 3.3 74.0 0.5 76.0 3.3 78.0 0.5 80.0 3.3 82.0 0.5 84.0 3.3" fill="none" stroke="#9d8a24" stroke-width="0.85"/></svg>
<svg class="ic" style="left:243.0px;top:558.5px" width="66" height="4"><polyline points="0.0 3.3 2.0 0.5 4.0 3.3 6.0 0.5 8.0 3.3 10.0 0.5 12.0 3.3 14.0 0.5 16.0 3.3 18.0 0.5 20.0 3.3 22.0 0.5 24.0 3.3 26.0 0.5 28.0 3.3 30.0 0.5 32.0 3.3 34.0 0.5 36.0 3.3 38.0 0.5 40.0 3.3 42.0 0.5 44.0 3.3 46.0 0.5 48.0 3.3 50.0 0.5 52.0 3.3 54.0 0.5 56.0 3.3 58.0 0.5 60.0 3.3 62.0 0.5 64.0 3.3" fill="none" stroke="#9d8a24" stroke-width="0.85"/></svg>
<svg class="ic" style="left:390.0px;top:558.5px" width="88" height="4"><polyline points="0.0 3.3 2.0 0.5 4.0 3.3 6.0 0.5 8.0 3.3 10.0 0.5 12.0 3.3 14.0 0.5 16.0 3.3 18.0 0.5 20.0 3.3 22.0 0.5 24.0 3.3 26.0 0.5 28.0 3.3 30.0 0.5 32.0 3.3 34.0 0.5 36.0 3.3 38.0 0.5 40.0 3.3 42.0 0.5 44.0 3.3 46.0 0.5 48.0 3.3 50.0 0.5 52.0 3.3 54.0 0.5 56.0 3.3 58.0 0.5 60.0 3.3 62.0 0.5 64.0 3.3 66.0 0.5 68.0 3.3 70.0 0.5 72.0 3.3 74.0 0.5 76.0 3.3 78.0 0.5 80.0 3.3 82.0 0.5 84.0 3.3" fill="none" stroke="#9d8a24" stroke-width="0.85"/></svg>
<svg class="ic" style="left:243.0px;top:573.5px" width="66" height="4"><polyline points="0.0 3.3 2.0 0.5 4.0 3.3 6.0 0.5 8.0 3.3 10.0 0.5 12.0 3.3 14.0 0.5 16.0 3.3 18.0 0.5 20.0 3.3 22.0 0.5 24.0 3.3 26.0 0.5 28.0 3.3 30.0 0.5 32.0 3.3 34.0 0.5 36.0 3.3 38.0 0.5 40.0 3.3 42.0 0.5 44.0 3.3 46.0 0.5 48.0 3.3 50.0 0.5 52.0 3.3 54.0 0.5 56.0 3.3 58.0 0.5 60.0 3.3 62.0 0.5 64.0 3.3" fill="none" stroke="#9d8a24" stroke-width="0.85"/></svg>
<svg class="ic" style="left:390.0px;top:573.5px" width="88" height="4"><polyline points="0.0 3.3 2.0 0.5 4.0 3.3 6.0 0.5 8.0 3.3 10.0 0.5 12.0 3.3 14.0 0.5 16.0 3.3 18.0 0.5 20.0 3.3 22.0 0.5 24.0 3.3 26.0 0.5 28.0 3.3 30.0 0.5 32.0 3.3 34.0 0.5 36.0 3.3 38.0 0.5 40.0 3.3 42.0 0.5 44.0 3.3 46.0 0.5 48.0 3.3 50.0 0.5 52.0 3.3 54.0 0.5 56.0 3.3 58.0 0.5 60.0 3.3 62.0 0.5 64.0 3.3 66.0 0.5 68.0 3.3 70.0 0.5 72.0 3.3 74.0 0.5 76.0 3.3 78.0 0.5 80.0 3.3 82.0 0.5 84.0 3.3" fill="none" stroke="#9d8a24" stroke-width="0.85"/></svg>
<svg class="ic" style="left:243.0px;top:588.5px" width="66" height="4"><polyline points="0.0 3.3 2.0 0.5 4.0 3.3 6.0 0.5 8.0 3.3 10.0 0.5 12.0 3.3 14.0 0.5 16.0 3.3 18.0 0.5 20.0 3.3 22.0 0.5 24.0 3.3 26.0 0.5 28.0 3.3 30.0 0.5 32.0 3.3 34.0 0.5 36.0 3.3 38.0 0.5 40.0 3.3 42.0 0.5 44.0 3.3 46.0 0.5 48.0 3.3 50.0 0.5 52.0 3.3 54.0 0.5 56.0 3.3 58.0 0.5 60.0 3.3 62.0 0.5 64.0 3.3" fill="none" stroke="#9d8a24" stroke-width="0.85"/></svg>
<svg class="ic" style="left:390.0px;top:588.5px" width="88" height="4"><polyline points="0.0 3.3 2.0 0.5 4.0 3.3 6.0 0.5 8.0 3.3 10.0 0.5 12.0 3.3 14.0 0.5 16.0 3.3 18.0 0.5 20.0 3.3 22.0 0.5 24.0 3.3 26.0 0.5 28.0 3.3 30.0 0.5 32.0 3.3 34.0 0.5 36.0 3.3 38.0 0.5 40.0 3.3 42.0 0.5 44.0 3.3 46.0 0.5 48.0 3.3 50.0 0.5 52.0 3.3 54.0 0.5 56.0 3.3 58.0 0.5 60.0 3.3 62.0 0.5 64.0 3.3 66.0 0.5 68.0 3.3 70.0 0.5 72.0 3.3 74.0 0.5 76.0 3.3 78.0 0.5 80.0 3.3 82.0 0.5 84.0 3.3" fill="none" stroke="#9d8a24" stroke-width="0.85"/></svg>
<svg class="ic" style="left:243.0px;top:603.5px" width="66" height="4"><polyline points="0.0 3.3 2.0 0.5 4.0 3.3 6.0 0.5 8.0 3.3 10.0 0.5 12.0 3.3 14.0 0.5 16.0 3.3 18.0 0.5 20.0 3.3 22.0 0.5 24.0 3.3 26.0 0.5 28.0 3.3 30.0 0.5 32.0 3.3 34.0 0.5 36.0 3.3 38.0 0.5 40.0 3.3 42.0 0.5 44.0 3.3 46.0 0.5 48.0 3.3 50.0 0.5 52.0 3.3 54.0 0.5 56.0 3.3 58.0 0.5 60.0 3.3 62.0 0.5 64.0 3.3" fill="none" stroke="#9d8a24" stroke-width="0.85"/></svg>
<svg class="ic" style="left:390.0px;top:603.5px" width="88" height="4"><polyline points="0.0 3.3 2.0 0.5 4.0 3.3 6.0 0.5 8.0 3.3 10.0 0.5 12.0 3.3 14.0 0.5 16.0 3.3 18.0 0.5 20.0 3.3 22.0 0.5 24.0 3.3 26.0 0.5 28.0 3.3 30.0 0.5 32.0 3.3 34.0 0.5 36.0 3.3 38.0 0.5 40.0 3.3 42.0 0.5 44.0 3.3 46.0 0.5 48.0 3.3 50.0 0.5 52.0 3.3 54.0 0.5 56.0 3.3 58.0 0.5 60.0 3.3 62.0 0.5 64.0 3.3 66.0 0.5 68.0 3.3 70.0 0.5 72.0 3.3 74.0 0.5 76.0 3.3 78.0 0.5 80.0 3.3 82.0 0.5 84.0 3.3" fill="none" stroke="#9d8a24" stroke-width="0.85"/></svg>
<svg class="ic" style="left:243.0px;top:618.5px" width="66" height="4"><polyline points="0.0 3.3 2.0 0.5 4.0 3.3 6.0 0.5 8.0 3.3 10.0 0.5 12.0 3.3 14.0 0.5 16.0 3.3 18.0 0.5 20.0 3.3 22.0 0.5 24.0 3.3 26.0 0.5 28.0 3.3 30.0 0.5 32.0 3.3 34.0 0.5 36.0 3.3 38.0 0.5 40.0 3.3 42.0 0.5 44.0 3.3 46.0 0.5 48.0 3.3 50.0 0.5 52.0 3.3 54.0 0.5 56.0 3.3 58.0 0.5 60.0 3.3 62.0 0.5 64.0 3.3" fill="none" stroke="#9d8a24" stroke-width="0.85"/></svg>
<svg class="ic" style="left:229.0px;top:633.5px" width="66" height="4"><polyline points="0.0 3.3 2.0 0.5 4.0 3.3 6.0 0.5 8.0 3.3 10.0 0.5 12.0 3.3 14.0 0.5 16.0 3.3 18.0 0.5 20.0 3.3 22.0 0.5 24.0 3.3 26.0 0.5 28.0 3.3 30.0 0.5 32.0 3.3 34.0 0.5 36.0 3.3 38.0 0.5 40.0 3.3 42.0 0.5 44.0 3.3 46.0 0.5 48.0 3.3 50.0 0.5 52.0 3.3 54.0 0.5 56.0 3.3 58.0 0.5 60.0 3.3 62.0 0.5 64.0 3.3" fill="none" stroke="#9d8a24" stroke-width="0.85"/></svg>
<svg class="ic" style="left:229.0px;top:648.5px" width="66" height="4"><polyline points="0.0 3.3 2.0 0.5 4.0 3.3 6.0 0.5 8.0 3.3 10.0 0.5 12.0 3.3 14.0 0.5 16.0 3.3 18.0 0.5 20.0 3.3 22.0 0.5 24.0 3.3 26.0 0.5 28.0 3.3 30.0 0.5 32.0 3.3 34.0 0.5 36.0 3.3 38.0 0.5 40.0 3.3 42.0 0.5 44.0 3.3 46.0 0.5 48.0 3.3 50.0 0.5 52.0 3.3 54.0 0.5 56.0 3.3 58.0 0.5 60.0 3.3 62.0 0.5 64.0 3.3" fill="none" stroke="#9d8a24" stroke-width="0.85"/></svg>
<svg class="ic" style="left:229.0px;top:663.5px" width="66" height="4"><polyline points="0.0 3.3 2.0 0.5 4.0 3.3 6.0 0.5 8.0 3.3 10.0 0.5 12.0 3.3 14.0 0.5 16.0 3.3 18.0 0.5 20.0 3.3 22.0 0.5 24.0 3.3 26.0 0.5 28.0 3.3 30.0 0.5 32.0 3.3 34.0 0.5 36.0 3.3 38.0 0.5 40.0 3.3 42.0 0.5 44.0 3.3 46.0 0.5 48.0 3.3 50.0 0.5 52.0 3.3 54.0 0.5 56.0 3.3 58.0 0.5 60.0 3.3 62.0 0.5 64.0 3.3" fill="none" stroke="#9d8a24" stroke-width="0.85"/></svg>
<svg class="ic" style="left:229.0px;top:678.5px" width="66" height="4"><polyline points="0.0 3.3 2.0 0.5 4.0 3.3 6.0 0.5 8.0 3.3 10.0 0.5 12.0 3.3 14.0 0.5 16.0 3.3 18.0 0.5 20.0 3.3 22.0 0.5 24.0 3.3 26.0 0.5 28.0 3.3 30.0 0.5 32.0 3.3 34.0 0.5 36.0 3.3 38.0 0.5 40.0 3.3 42.0 0.5 44.0 3.3 46.0 0.5 48.0 3.3 50.0 0.5 52.0 3.3 54.0 0.5 56.0 3.3 58.0 0.5 60.0 3.3 62.0 0.5 64.0 3.3" fill="none" stroke="#9d8a24" stroke-width="0.85"/></svg>
<svg class="ic" style="left:229.0px;top:693.5px" width="66" height="4"><polyline points="0.0 3.3 2.0 0.5 4.0 3.3 6.0 0.5 8.0 3.3 10.0 0.5 12.0 3.3 14.0 0.5 16.0 3.3 18.0 0.5 20.0 3.3 22.0 0.5 24.0 3.3 26.0 0.5 28.0 3.3 30.0 0.5 32.0 3.3 34.0 0.5 36.0 3.3 38.0 0.5 40.0 3.3 42.0 0.5 44.0 3.3 46.0 0.5 48.0 3.3 50.0 0.5 52.0 3.3 54.0 0.5 56.0 3.3 58.0 0.5 60.0 3.3 62.0 0.5 64.0 3.3" fill="none" stroke="#9d8a24" stroke-width="0.85"/></svg>
<svg class="ic" style="left:313.0px;top:693.5px" width="60" height="4"><polyline points="0.0 3.3 2.0 0.5 4.0 3.3 6.0 0.5 8.0 3.3 10.0 0.5 12.0 3.3 14.0 0.5 16.0 3.3 18.0 0.5 20.0 3.3 22.0 0.5 24.0 3.3 26.0 0.5 28.0 3.3 30.0 0.5 32.0 3.3 34.0 0.5 36.0 3.3 38.0 0.5 40.0 3.3 42.0 0.5 44.0 3.3 46.0 0.5 48.0 3.3 50.0 0.5 52.0 3.3 54.0 0.5 56.0 3.3" fill="none" stroke="#9d8a24" stroke-width="0.85"/></svg>
<svg class="ic" style="left:229.0px;top:708.5px" width="66" height="4"><polyline points="0.0 3.3 2.0 0.5 4.0 3.3 6.0 0.5 8.0 3.3 10.0 0.5 12.0 3.3 14.0 0.5 16.0 3.3 18.0 0.5 20.0 3.3 22.0 0.5 24.0 3.3 26.0 0.5 28.0 3.3 30.0 0.5 32.0 3.3 34.0 0.5 36.0 3.3 38.0 0.5 40.0 3.3 42.0 0.5 44.0 3.3 46.0 0.5 48.0 3.3 50.0 0.5 52.0 3.3 54.0 0.5 56.0 3.3 58.0 0.5 60.0 3.3 62.0 0.5 64.0 3.3" fill="none" stroke="#9d8a24" stroke-width="0.85"/></svg>
<svg class="ic" style="left:313.0px;top:708.5px" width="52" height="4"><polyline points="0.0 3.3 2.0 0.5 4.0 3.3 6.0 0.5 8.0 3.3 10.0 0.5 12.0 3.3 14.0 0.5 16.0 3.3 18.0 0.5 20.0 3.3 22.0 0.5 24.0 3.3 26.0 0.5 28.0 3.3 30.0 0.5 32.0 3.3 34.0 0.5 36.0 3.3 38.0 0.5 40.0 3.3 42.0 0.5 44.0 3.3 46.0 0.5 48.0 3.3 50.0 0.5" fill="none" stroke="#9d8a24" stroke-width="0.85"/></svg>
<svg class="ic" style="left:229.0px;top:723.5px" width="66" height="4"><polyline points="0.0 3.3 2.0 0.5 4.0 3.3 6.0 0.5 8.0 3.3 10.0 0.5 12.0 3.3 14.0 0.5 16.0 3.3 18.0 0.5 20.0 3.3 22.0 0.5 24.0 3.3 26.0 0.5 28.0 3.3 30.0 0.5 32.0 3.3 34.0 0.5 36.0 3.3 38.0 0.5 40.0 3.3 42.0 0.5 44.0 3.3 46.0 0.5 48.0 3.3 50.0 0.5 52.0 3.3 54.0 0.5 56.0 3.3 58.0 0.5 60.0 3.3 62.0 0.5 64.0 3.3" fill="none" stroke="#9d8a24" stroke-width="0.85"/></svg>
<svg class="ic" style="left:229.0px;top:738.5px" width="66" height="4"><polyline points="0.0 3.3 2.0 0.5 4.0 3.3 6.0 0.5 8.0 3.3 10.0 0.5 12.0 3.3 14.0 0.5 16.0 3.3 18.0 0.5 20.0 3.3 22.0 0.5 24.0 3.3 26.0 0.5 28.0 3.3 30.0 0.5 32.0 3.3 34.0 0.5 36.0 3.3 38.0 0.5 40.0 3.3 42.0 0.5 44.0 3.3 46.0 0.5 48.0 3.3 50.0 0.5 52.0 3.3 54.0 0.5 56.0 3.3 58.0 0.5 60.0 3.3 62.0 0.5 64.0 3.3" fill="none" stroke="#9d8a24" stroke-width="0.85"/></svg>
<svg class="ic" style="left:313.0px;top:738.5px" width="88" height="4"><polyline points="0.0 3.3 2.0 0.5 4.0 3.3 6.0 0.5 8.0 3.3 10.0 0.5 12.0 3.3 14.0 0.5 16.0 3.3 18.0 0.5 20.0 3.3 22.0 0.5 24.0 3.3 26.0 0.5 28.0 3.3 30.0 0.5 32.0 3.3 34.0 0.5 36.0 3.3 38.0 0.5 40.0 3.3 42.0 0.5 44.0 3.3 46.0 0.5 48.0 3.3 50.0 0.5 52.0 3.3 54.0 0.5 56.0 3.3 58.0 0.5 60.0 3.3 62.0 0.5 64.0 3.3 66.0 0.5 68.0 3.3 70.0 0.5 72.0 3.3 74.0 0.5 76.0 3.3 78.0 0.5 80.0 3.3 82.0 0.5 84.0 3.3" fill="none" stroke="#9d8a24" stroke-width="0.85"/></svg>
<svg class="ic" style="left:432.0px;top:738.5px" width="88" height="4"><polyline points="0.0 3.3 2.0 0.5 4.0 3.3 6.0 0.5 8.0 3.3 10.0 0.5 12.0 3.3 14.0 0.5 16.0 3.3 18.0 0.5 20.0 3.3 22.0 0.5 24.0 3.3 26.0 0.5 28.0 3.3 30.0 0.5 32.0 3.3 34.0 0.5 36.0 3.3 38.0 0.5 40.0 3.3 42.0 0.5 44.0 3.3 46.0 0.5 48.0 3.3 50.0 0.5 52.0 3.3 54.0 0.5 56.0 3.3 58.0 0.5 60.0 3.3 62.0 0.5 64.0 3.3 66.0 0.5 68.0 3.3 70.0 0.5 72.0 3.3 74.0 0.5 76.0 3.3 78.0 0.5 80.0 3.3 82.0 0.5 84.0 3.3" fill="none" stroke="#9d8a24" stroke-width="0.85"/></svg>
<svg class="ic" style="left:229.0px;top:753.5px" width="66" height="4"><polyline points="0.0 3.3 2.0 0.5 4.0 3.3 6.0 0.5 8.0 3.3 10.0 0.5 12.0 3.3 14.0 0.5 16.0 3.3 18.0 0.5 20.0 3.3 22.0 0.5 24.0 3.3 26.0 0.5 28.0 3.3 30.0 0.5 32.0 3.3 34.0 0.5 36.0 3.3 38.0 0.5 40.0 3.3 42.0 0.5 44.0 3.3 46.0 0.5 48.0 3.3 50.0 0.5 52.0 3.3 54.0 0.5 56.0 3.3 58.0 0.5 60.0 3.3 62.0 0.5 64.0 3.3" fill="none" stroke="#9d8a24" stroke-width="0.85"/></svg>
<svg class="ic" style="left:313.0px;top:753.5px" width="88" height="4"><polyline points="0.0 3.3 2.0 0.5 4.0 3.3 6.0 0.5 8.0 3.3 10.0 0.5 12.0 3.3 14.0 0.5 16.0 3.3 18.0 0.5 20.0 3.3 22.0 0.5 24.0 3.3 26.0 0.5 28.0 3.3 30.0 0.5 32.0 3.3 34.0 0.5 36.0 3.3 38.0 0.5 40.0 3.3 42.0 0.5 44.0 3.3 46.0 0.5 48.0 3.3 50.0 0.5 52.0 3.3 54.0 0.5 56.0 3.3 58.0 0.5 60.0 3.3 62.0 0.5 64.0 3.3 66.0 0.5 68.0 3.3 70.0 0.5 72.0 3.3 74.0 0.5 76.0 3.3 78.0 0.5 80.0 3.3 82.0 0.5 84.0 3.3" fill="none" stroke="#9d8a24" stroke-width="0.85"/></svg>
<svg class="ic" style="left:432.0px;top:753.5px" width="88" height="4"><polyline points="0.0 3.3 2.0 0.5 4.0 3.3 6.0 0.5 8.0 3.3 10.0 0.5 12.0 3.3 14.0 0.5 16.0 3.3 18.0 0.5 20.0 3.3 22.0 0.5 24.0 3.3 26.0 0.5 28.0 3.3 30.0 0.5 32.0 3.3 34.0 0.5 36.0 3.3 38.0 0.5 40.0 3.3 42.0 0.5 44.0 3.3 46.0 0.5 48.0 3.3 50.0 0.5 52.0 3.3 54.0 0.5 56.0 3.3 58.0 0.5 60.0 3.3 62.0 0.5 64.0 3.3 66.0 0.5 68.0 3.3 70.0 0.5 72.0 3.3 74.0 0.5 76.0 3.3 78.0 0.5 80.0 3.3 82.0 0.5 84.0 3.3" fill="none" stroke="#9d8a24" stroke-width="0.85"/></svg>
<svg class="ic" style="left:229.0px;top:768.5px" width="66" height="4"><polyline points="0.0 3.3 2.0 0.5 4.0 3.3 6.0 0.5 8.0 3.3 10.0 0.5 12.0 3.3 14.0 0.5 16.0 3.3 18.0 0.5 20.0 3.3 22.0 0.5 24.0 3.3 26.0 0.5 28.0 3.3 30.0 0.5 32.0 3.3 34.0 0.5 36.0 3.3 38.0 0.5 40.0 3.3 42.0 0.5 44.0 3.3 46.0 0.5 48.0 3.3 50.0 0.5 52.0 3.3 54.0 0.5 56.0 3.3 58.0 0.5 60.0 3.3 62.0 0.5 64.0 3.3" fill="none" stroke="#9d8a24" stroke-width="0.85"/></svg>
<svg class="ic" style="left:313.0px;top:768.5px" width="88" height="4"><polyline points="0.0 3.3 2.0 0.5 4.0 3.3 6.0 0.5 8.0 3.3 10.0 0.5 12.0 3.3 14.0 0.5 16.0 3.3 18.0 0.5 20.0 3.3 22.0 0.5 24.0 3.3 26.0 0.5 28.0 3.3 30.0 0.5 32.0 3.3 34.0 0.5 36.0 3.3 38.0 0.5 40.0 3.3 42.0 0.5 44.0 3.3 46.0 0.5 48.0 3.3 50.0 0.5 52.0 3.3 54.0 0.5 56.0 3.3 58.0 0.5 60.0 3.3 62.0 0.5 64.0 3.3 66.0 0.5 68.0 3.3 70.0 0.5 72.0 3.3 74.0 0.5 76.0 3.3 78.0 0.5 80.0 3.3 82.0 0.5 84.0 3.3" fill="none" stroke="#9d8a24" stroke-width="0.85"/></svg>
<svg class="ic" style="left:229.0px;top:783.5px" width="66" height="4"><polyline points="0.0 3.3 2.0 0.5 4.0 3.3 6.0 0.5 8.0 3.3 10.0 0.5 12.0 3.3 14.0 0.5 16.0 3.3 18.0 0.5 20.0 3.3 22.0 0.5 24.0 3.3 26.0 0.5 28.0 3.3 30.0 0.5 32.0 3.3 34.0 0.5 36.0 3.3 38.0 0.5 40.0 3.3 42.0 0.5 44.0 3.3 46.0 0.5 48.0 3.3 50.0 0.5 52.0 3.3 54.0 0.5 56.0 3.3 58.0 0.5 60.0 3.3 62.0 0.5 64.0 3.3" fill="none" stroke="#9d8a24" stroke-width="0.85"/></svg>
<svg class="ic" style="left:313.0px;top:783.5px" width="88" height="4"><polyline points="0.0 3.3 2.0 0.5 4.0 3.3 6.0 0.5 8.0 3.3 10.0 0.5 12.0 3.3 14.0 0.5 16.0 3.3 18.0 0.5 20.0 3.3 22.0 0.5 24.0 3.3 26.0 0.5 28.0 3.3 30.0 0.5 32.0 3.3 34.0 0.5 36.0 3.3 38.0 0.5 40.0 3.3 42.0 0.5 44.0 3.3 46.0 0.5 48.0 3.3 50.0 0.5 52.0 3.3 54.0 0.5 56.0 3.3 58.0 0.5 60.0 3.3 62.0 0.5 64.0 3.3 66.0 0.5 68.0 3.3 70.0 0.5 72.0 3.3 74.0 0.5 76.0 3.3 78.0 0.5 80.0 3.3 82.0 0.5 84.0 3.3" fill="none" stroke="#9d8a24" stroke-width="0.85"/></svg>
<svg class="ic" style="left:229.0px;top:798.5px" width="66" height="4"><polyline points="0.0 3.3 2.0 0.5 4.0 3.3 6.0 0.5 8.0 3.3 10.0 0.5 12.0 3.3 14.0 0.5 16.0 3.3 18.0 0.5 20.0 3.3 22.0 0.5 24.0 3.3 26.0 0.5 28.0 3.3 30.0 0.5 32.0 3.3 34.0 0.5 36.0 3.3 38.0 0.5 40.0 3.3 42.0 0.5 44.0 3.3 46.0 0.5 48.0 3.3 50.0 0.5 52.0 3.3 54.0 0.5 56.0 3.3 58.0 0.5 60.0 3.3 62.0 0.5 64.0 3.3" fill="none" stroke="#9d8a24" stroke-width="0.85"/></svg>
<svg class="ic" style="left:313.0px;top:798.5px" width="88" height="4"><polyline points="0.0 3.3 2.0 0.5 4.0 3.3 6.0 0.5 8.0 3.3 10.0 0.5 12.0 3.3 14.0 0.5 16.0 3.3 18.0 0.5 20.0 3.3 22.0 0.5 24.0 3.3 26.0 0.5 28.0 3.3 30.0 0.5 32.0 3.3 34.0 0.5 36.0 3.3 38.0 0.5 40.0 3.3 42.0 0.5 44.0 3.3 46.0 0.5 48.0 3.3 50.0 0.5 52.0 3.3 54.0 0.5 56.0 3.3 58.0 0.5 60.0 3.3 62.0 0.5 64.0 3.3 66.0 0.5 68.0 3.3 70.0 0.5 72.0 3.3 74.0 0.5 76.0 3.3 78.0 0.5 80.0 3.3 82.0 0.5 84.0 3.3" fill="none" stroke="#9d8a24" stroke-width="0.85"/></svg>
<svg class="ic" style="left:229.0px;top:813.5px" width="66" height="4"><polyline points="0.0 3.3 2.0 0.5 4.0 3.3 6.0 0.5 8.0 3.3 10.0 0.5 12.0 3.3 14.0 0.5 16.0 3.3 18.0 0.5 20.0 3.3 22.0 0.5 24.0 3.3 26.0 0.5 28.0 3.3 30.0 0.5 32.0 3.3 34.0 0.5 36.0 3.3 38.0 0.5 40.0 3.3 42.0 0.5 44.0 3.3 46.0 0.5 48.0 3.3 50.0 0.5 52.0 3.3 54.0 0.5 56.0 3.3 58.0 0.5 60.0 3.3 62.0 0.5 64.0 3.3" fill="none" stroke="#9d8a24" stroke-width="0.85"/></svg>
<svg class="ic" style="left:313.0px;top:813.5px" width="80" height="4"><polyline points="0.0 3.3 2.0 0.5 4.0 3.3 6.0 0.5 8.0 3.3 10.0 0.5 12.0 3.3 14.0 0.5 16.0 3.3 18.0 0.5 20.0 3.3 22.0 0.5 24.0 3.3 26.0 0.5 28.0 3.3 30.0 0.5 32.0 3.3 34.0 0.5 36.0 3.3 38.0 0.5 40.0 3.3 42.0 0.5 44.0 3.3 46.0 0.5 48.0 3.3 50.0 0.5 52.0 3.3 54.0 0.5 56.0 3.3 58.0 0.5 60.0 3.3 62.0 0.5 64.0 3.3 66.0 0.5 68.0 3.3 70.0 0.5 72.0 3.3 74.0 0.5 76.0 3.3 78.0 0.5" fill="none" stroke="#9d8a24" stroke-width="0.85"/></svg>
<svg class="ic" style="left:229.0px;top:828.5px" width="66" height="4"><polyline points="0.0 3.3 2.0 0.5 4.0 3.3 6.0 0.5 8.0 3.3 10.0 0.5 12.0 3.3 14.0 0.5 16.0 3.3 18.0 0.5 20.0 3.3 22.0 0.5 24.0 3.3 26.0 0.5 28.0 3.3 30.0 0.5 32.0 3.3 34.0 0.5 36.0 3.3 38.0 0.5 40.0 3.3 42.0 0.5 44.0 3.3 46.0 0.5 48.0 3.3 50.0 0.5 52.0 3.3 54.0 0.5 56.0 3.3 58.0 0.5 60.0 3.3 62.0 0.5 64.0 3.3" fill="none" stroke="#9d8a24" stroke-width="0.85"/></svg>
<svg class="ic" style="left:313.0px;top:828.5px" width="80" height="4"><polyline points="0.0 3.3 2.0 0.5 4.0 3.3 6.0 0.5 8.0 3.3 10.0 0.5 12.0 3.3 14.0 0.5 16.0 3.3 18.0 0.5 20.0 3.3 22.0 0.5 24.0 3.3 26.0 0.5 28.0 3.3 30.0 0.5 32.0 3.3 34.0 0.5 36.0 3.3 38.0 0.5 40.0 3.3 42.0 0.5 44.0 3.3 46.0 0.5 48.0 3.3 50.0 0.5 52.0 3.3 54.0 0.5 56.0 3.3 58.0 0.5 60.0 3.3 62.0 0.5 64.0 3.3 66.0 0.5 68.0 3.3 70.0 0.5 72.0 3.3 74.0 0.5 76.0 3.3 78.0 0.5" fill="none" stroke="#9d8a24" stroke-width="0.85"/></svg>
<svg class="ic" style="left:229.0px;top:843.5px" width="66" height="4"><polyline points="0.0 3.3 2.0 0.5 4.0 3.3 6.0 0.5 8.0 3.3 10.0 0.5 12.0 3.3 14.0 0.5 16.0 3.3 18.0 0.5 20.0 3.3 22.0 0.5 24.0 3.3 26.0 0.5 28.0 3.3 30.0 0.5 32.0 3.3 34.0 0.5 36.0 3.3 38.0 0.5 40.0 3.3 42.0 0.5 44.0 3.3 46.0 0.5 48.0 3.3 50.0 0.5 52.0 3.3 54.0 0.5 56.0 3.3 58.0 0.5 60.0 3.3 62.0 0.5 64.0 3.3" fill="none" stroke="#9d8a24" stroke-width="0.85"/></svg>
<svg class="ic" style="left:229.0px;top:858.5px" width="66" height="4"><polyline points="0.0 3.3 2.0 0.5 4.0 3.3 6.0 0.5 8.0 3.3 10.0 0.5 12.0 3.3 14.0 0.5 16.0 3.3 18.0 0.5 20.0 3.3 22.0 0.5 24.0 3.3 26.0 0.5 28.0 3.3 30.0 0.5 32.0 3.3 34.0 0.5 36.0 3.3 38.0 0.5 40.0 3.3 42.0 0.5 44.0 3.3 46.0 0.5 48.0 3.3 50.0 0.5 52.0 3.3 54.0 0.5 56.0 3.3 58.0 0.5 60.0 3.3 62.0 0.5 64.0 3.3" fill="none" stroke="#9d8a24" stroke-width="0.85"/></svg>
<svg class="ic" style="left:229.0px;top:873.5px" width="66" height="4"><polyline points="0.0 3.3 2.0 0.5 4.0 3.3 6.0 0.5 8.0 3.3 10.0 0.5 12.0 3.3 14.0 0.5 16.0 3.3 18.0 0.5 20.0 3.3 22.0 0.5 24.0 3.3 26.0 0.5 28.0 3.3 30.0 0.5 32.0 3.3 34.0 0.5 36.0 3.3 38.0 0.5 40.0 3.3 42.0 0.5 44.0 3.3 46.0 0.5 48.0 3.3 50.0 0.5 52.0 3.3 54.0 0.5 56.0 3.3 58.0 0.5 60.0 3.3 62.0 0.5 64.0 3.3" fill="none" stroke="#9d8a24" stroke-width="0.85"/></svg>
<svg class="ic" style="left:229.0px;top:888.5px" width="66" height="4"><polyline points="0.0 3.3 2.0 0.5 4.0 3.3 6.0 0.5 8.0 3.3 10.0 0.5 12.0 3.3 14.0 0.5 16.0 3.3 18.0 0.5 20.0 3.3 22.0 0.5 24.0 3.3 26.0 0.5 28.0 3.3 30.0 0.5 32.0 3.3 34.0 0.5 36.0 3.3 38.0 0.5 40.0 3.3 42.0 0.5 44.0 3.3 46.0 0.5 48.0 3.3 50.0 0.5 52.0 3.3 54.0 0.5 56.0 3.3 58.0 0.5 60.0 3.3 62.0 0.5 64.0 3.3" fill="none" stroke="#9d8a24" stroke-width="0.85"/></svg>
<svg class="ic" style="left:229.0px;top:903.5px" width="66" height="4"><polyline points="0.0 3.3 2.0 0.5 4.0 3.3 6.0 0.5 8.0 3.3 10.0 0.5 12.0 3.3 14.0 0.5 16.0 3.3 18.0 0.5 20.0 3.3 22.0 0.5 24.0 3.3 26.0 0.5 28.0 3.3 30.0 0.5 32.0 3.3 34.0 0.5 36.0 3.3 38.0 0.5 40.0 3.3 42.0 0.5 44.0 3.3 46.0 0.5 48.0 3.3 50.0 0.5 52.0 3.3 54.0 0.5 56.0 3.3 58.0 0.5 60.0 3.3 62.0 0.5 64.0 3.3" fill="none" stroke="#9d8a24" stroke-width="0.85"/></svg>
<svg class="ic" style="left:229.0px;top:918.5px" width="66" height="4"><polyline points="0.0 3.3 2.0 0.5 4.0 3.3 6.0 0.5 8.0 3.3 10.0 0.5 12.0 3.3 14.0 0.5 16.0 3.3 18.0 0.5 20.0 3.3 22.0 0.5 24.0 3.3 26.0 0.5 28.0 3.3 30.0 0.5 32.0 3.3 34.0 0.5 36.0 3.3 38.0 0.5 40.0 3.3 42.0 0.5 44.0 3.3 46.0 0.5 48.0 3.3 50.0 0.5 52.0 3.3 54.0 0.5 56.0 3.3 58.0 0.5 60.0 3.3 62.0 0.5 64.0 3.3" fill="none" stroke="#9d8a24" stroke-width="0.85"/></svg>
<svg class="ic" style="left:229.0px;top:933.5px" width="66" height="4"><polyline points="0.0 3.3 2.0 0.5 4.0 3.3 6.0 0.5 8.0 3.3 10.0 0.5 12.0 3.3 14.0 0.5 16.0 3.3 18.0 0.5 20.0 3.3 22.0 0.5 24.0 3.3 26.0 0.5 28.0 3.3 30.0 0.5 32.0 3.3 34.0 0.5 36.0 3.3 38.0 0.5 40.0 3.3 42.0 0.5 44.0 3.3 46.0 0.5 48.0 3.3 50.0 0.5 52.0 3.3 54.0 0.5 56.0 3.3 58.0 0.5 60.0 3.3 62.0 0.5 64.0 3.3" fill="none" stroke="#9d8a24" stroke-width="0.85"/></svg>
<svg class="ic" style="left:229.0px;top:948.5px" width="66" height="4"><polyline points="0.0 3.3 2.0 0.5 4.0 3.3 6.0 0.5 8.0 3.3 10.0 0.5 12.0 3.3 14.0 0.5 16.0 3.3 18.0 0.5 20.0 3.3 22.0 0.5 24.0 3.3 26.0 0.5 28.0 3.3 30.0 0.5 32.0 3.3 34.0 0.5 36.0 3.3 38.0 0.5 40.0 3.3 42.0 0.5 44.0 3.3 46.0 0.5 48.0 3.3 50.0 0.5 52.0 3.3 54.0 0.5 56.0 3.3 58.0 0.5 60.0 3.3 62.0 0.5 64.0 3.3" fill="none" stroke="#9d8a24" stroke-width="0.85"/></svg>
<svg class="ic" style="left:229.0px;top:963.5px" width="66" height="4"><polyline points="0.0 3.3 2.0 0.5 4.0 3.3 6.0 0.5 8.0 3.3 10.0 0.5 12.0 3.3 14.0 0.5 16.0 3.3 18.0 0.5 20.0 3.3 22.0 0.5 24.0 3.3 26.0 0.5 28.0 3.3 30.0 0.5 32.0 3.3 34.0 0.5 36.0 3.3 38.0 0.5 40.0 3.3 42.0 0.5 44.0 3.3 46.0 0.5 48.0 3.3 50.0 0.5 52.0 3.3 54.0 0.5 56.0 3.3 58.0 0.5 60.0 3.3 62.0 0.5 64.0 3.3" fill="none" stroke="#9d8a24" stroke-width="0.85"/></svg>
<svg class="ic" style="left:229.0px;top:978.5px" width="66" height="4"><polyline points="0.0 3.3 2.0 0.5 4.0 3.3 6.0 0.5 8.0 3.3 10.0 0.5 12.0 3.3 14.0 0.5 16.0 3.3 18.0 0.5 20.0 3.3 22.0 0.5 24.0 3.3 26.0 0.5 28.0 3.3 30.0 0.5 32.0 3.3 34.0 0.5 36.0 3.3 38.0 0.5 40.0 3.3 42.0 0.5 44.0 3.3 46.0 0.5 48.0 3.3 50.0 0.5 52.0 3.3 54.0 0.5 56.0 3.3 58.0 0.5 60.0 3.3 62.0 0.5 64.0 3.3" fill="none" stroke="#9d8a24" stroke-width="0.85"/></svg>
<svg class="ic" style="left:446.0px;top:978.5px" width="32" height="4"><polyline points="0.0 3.3 2.0 0.5 4.0 3.3 6.0 0.5 8.0 3.3 10.0 0.5 12.0 3.3 14.0 0.5 16.0 3.3 18.0 0.5 20.0 3.3 22.0 0.5 24.0 3.3 26.0 0.5 28.0 3.3" fill="none" stroke="#9d8a24" stroke-width="0.85"/></svg>
<svg class="ic" style="left:544.0px;top:978.5px" width="32" height="4"><polyline points="0.0 3.3 2.0 0.5 4.0 3.3 6.0 0.5 8.0 3.3 10.0 0.5 12.0 3.3 14.0 0.5 16.0 3.3 18.0 0.5 20.0 3.3 22.0 0.5 24.0 3.3 26.0 0.5 28.0 3.3" fill="none" stroke="#9d8a24" stroke-width="0.85"/></svg>
<svg class="ic" style="left:229.0px;top:993.5px" width="66" height="4"><polyline points="0.0 3.3 2.0 0.5 4.0 3.3 6.0 0.5 8.0 3.3 10.0 0.5 12.0 3.3 14.0 0.5 16.0 3.3 18.0 0.5 20.0 3.3 22.0 0.5 24.0 3.3 26.0 0.5 28.0 3.3 30.0 0.5 32.0 3.3 34.0 0.5 36.0 3.3 38.0 0.5 40.0 3.3 42.0 0.5 44.0 3.3 46.0 0.5 48.0 3.3 50.0 0.5 52.0 3.3 54.0 0.5 56.0 3.3 58.0 0.5 60.0 3.3 62.0 0.5 64.0 3.3" fill="none" stroke="#9d8a24" stroke-width="0.85"/></svg>
<svg class="ic" style="left:446.0px;top:993.5px" width="32" height="4"><polyline points="0.0 3.3 2.0 0.5 4.0 3.3 6.0 0.5 8.0 3.3 10.0 0.5 12.0 3.3 14.0 0.5 16.0 3.3 18.0 0.5 20.0 3.3 22.0 0.5 24.0 3.3 26.0 0.5 28.0 3.3" fill="none" stroke="#9d8a24" stroke-width="0.85"/></svg>
<svg class="ic" style="left:551.0px;top:993.5px" width="32" height="4"><polyline points="0.0 3.3 2.0 0.5 4.0 3.3 6.0 0.5 8.0 3.3 10.0 0.5 12.0 3.3 14.0 0.5 16.0 3.3 18.0 0.5 20.0 3.3 22.0 0.5 24.0 3.3 26.0 0.5 28.0 3.3" fill="none" stroke="#9d8a24" stroke-width="0.85"/></svg>
<svg class="ic" style="left:229.0px;top:1008.5px" width="66" height="4"><polyline points="0.0 3.3 2.0 0.5 4.0 3.3 6.0 0.5 8.0 3.3 10.0 0.5 12.0 3.3 14.0 0.5 16.0 3.3 18.0 0.5 20.0 3.3 22.0 0.5 24.0 3.3 26.0 0.5 28.0 3.3 30.0 0.5 32.0 3.3 34.0 0.5 36.0 3.3 38.0 0.5 40.0 3.3 42.0 0.5 44.0 3.3 46.0 0.5 48.0 3.3 50.0 0.5 52.0 3.3 54.0 0.5 56.0 3.3 58.0 0.5 60.0 3.3 62.0 0.5 64.0 3.3" fill="none" stroke="#9d8a24" stroke-width="0.85"/></svg>
<svg class="ic" style="left:229.0px;top:1023.5px" width="66" height="4"><polyline points="0.0 3.3 2.0 0.5 4.0 3.3 6.0 0.5 8.0 3.3 10.0 0.5 12.0 3.3 14.0 0.5 16.0 3.3 18.0 0.5 20.0 3.3 22.0 0.5 24.0 3.3 26.0 0.5 28.0 3.3 30.0 0.5 32.0 3.3 34.0 0.5 36.0 3.3 38.0 0.5 40.0 3.3 42.0 0.5 44.0 3.3 46.0 0.5 48.0 3.3 50.0 0.5 52.0 3.3 54.0 0.5 56.0 3.3 58.0 0.5 60.0 3.3 62.0 0.5 64.0 3.3" fill="none" stroke="#9d8a24" stroke-width="0.85"/></svg>
<svg class="ic" style="left:229.0px;top:1038.5px" width="66" height="4"><polyline points="0.0 3.3 2.0 0.5 4.0 3.3 6.0 0.5 8.0 3.3 10.0 0.5 12.0 3.3 14.0 0.5 16.0 3.3 18.0 0.5 20.0 3.3 22.0 0.5 24.0 3.3 26.0 0.5 28.0 3.3 30.0 0.5 32.0 3.3 34.0 0.5 36.0 3.3 38.0 0.5 40.0 3.3 42.0 0.5 44.0 3.3 46.0 0.5 48.0 3.3 50.0 0.5 52.0 3.3 54.0 0.5 56.0 3.3 58.0 0.5 60.0 3.3 62.0 0.5 64.0 3.3" fill="none" stroke="#9d8a24" stroke-width="0.85"/></svg>
<svg class="ic" style="left:229.0px;top:1053.5px" width="66" height="4"><polyline points="0.0 3.3 2.0 0.5 4.0 3.3 6.0 0.5 8.0 3.3 10.0 0.5 12.0 3.3 14.0 0.5 16.0 3.3 18.0 0.5 20.0 3.3 22.0 0.5 24.0 3.3 26.0 0.5 28.0 3.3 30.0 0.5 32.0 3.3 34.0 0.5 36.0 3.3 38.0 0.5 40.0 3.3 42.0 0.5 44.0 3.3 46.0 0.5 48.0 3.3 50.0 0.5 52.0 3.3 54.0 0.5 56.0 3.3 58.0 0.5 60.0 3.3 62.0 0.5 64.0 3.3" fill="none" stroke="#9d8a24" stroke-width="0.85"/></svg>
</div></div>
<svg class="ic" style="left:370px;top:145px" width="9" height="9" viewBox="0 0 9 9" ><rect x="0.5" y="0.5" width="8" height="8" fill="#323232" stroke="#767676"/><path d="M2 4.5h5M4.5 2v5" stroke="#979797"/></svg>
<svg class="ic" style="left:370px;top:175px" width="9" height="10" viewBox="0 0 9 10" ><path d="M0.5 0.5h8v5l-4 4-4-4z" fill="#323232" stroke="#767676"/><path d="M2 3.5h5" stroke="#8f8f8f"/></svg>
<svg class="ic" style="left:370px;top:205px" width="9" height="10" viewBox="0 0 9 10" ><path d="M0.5 9.5h8v-5l-4-4-4 4z" fill="#323232" stroke="#767676"/><path d="M2 6h5" stroke="#8f8f8f"/></svg>
<svg class="ic" style="left:370px;top:235px" width="9" height="10" viewBox="0 0 9 10" ><path d="M0.5 0.5h8v5l-4 4-4-4z" fill="#323232" stroke="#767676"/><path d="M2 3.5h5" stroke="#8f8f8f"/></svg>
<svg class="ic" style="left:370px;top:280px" width="9" height="10" viewBox="0 0 9 10" ><path d="M0.5 0.5h8v5l-4 4-4-4z" fill="#323232" stroke="#767676"/><path d="M2 3.5h5" stroke="#8f8f8f"/></svg>
<svg class="ic" style="left:370px;top:340px" width="9" height="10" viewBox="0 0 9 10" ><path d="M0.5 9.5h8v-5l-4-4-4 4z" fill="#323232" stroke="#767676"/><path d="M2 6h5" stroke="#8f8f8f"/></svg>
<svg class="ic" style="left:370px;top:355px" width="9" height="10" viewBox="0 0 9 10" ><path d="M0.5 9.5h8v-5l-4-4-4 4z" fill="#323232" stroke="#767676"/><path d="M2 6h5" stroke="#8f8f8f"/></svg>
<svg class="ic" style="left:370px;top:385px" width="9" height="10" viewBox="0 0 9 10" ><path d="M0.5 0.5h8v5l-4 4-4-4z" fill="#323232" stroke="#767676"/><path d="M2 3.5h5" stroke="#8f8f8f"/></svg>
<div class="b" style="left:1956px;top:83px;width:21px;height:964px;background:#444749;border-left:1px solid #363839"></div>
<svg class="ic" style="left:1960px;top:93px" width="14" height="15" viewBox="0 0 14 15" ><path d="M2 5.5c0-3 2-4.5 5-4.5s5 1.5 5 4.5z" fill="#d03a3a"/><rect x="1.5" y="4.5" width="11" height="2" fill="#3a3a3a"/><ellipse cx="7" cy="9.5" rx="4" ry="3.5" fill="#f1cc97"/><rect x="3.5" y="8" width="7" height="1.5" fill="#3a3a3a"/><path d="M2 15c0-2 2-3 5-3s5 1 5 3z" fill="#8f8f8f"/></svg>
<div style="position:absolute;left:1967px;top:144.5px;transform:translate(-50%,-50%) rotate(90deg) scaleX(0.95);white-space:nowrap;font-size:12px;color:#c5c5c5;line-height:1;-webkit-text-stroke:0.2px currentColor">Commander</div>
<svg class="ic" style="left:1960px;top:200px" width="14" height="15" viewBox="0 0 14 15" ><g stroke="#a180cc" stroke-width="0.9" fill="none"><path d="M3 4l-2-2M11 4l2-2M2.5 8h-2M11.5 8h2M3 12l-2 2M11 12l2 2"/></g><ellipse cx="7" cy="3.5" rx="2" ry="2" fill="#b694e2"/><ellipse cx="7" cy="7.5" rx="2.5" ry="2" fill="#b694e2"/><ellipse cx="7" cy="11.5" rx="3" ry="3" fill="#b694e2"/></svg>
<div style="position:absolute;left:1967px;top:241.5px;transform:translate(-50%,-50%) rotate(90deg) scaleX(0.95);white-space:nowrap;font-size:12px;color:#c5c5c5;line-height:1;-webkit-text-stroke:0.2px currentColor">Ant Build</div>
<div class="b" style="left:57px;top:1047.5px;width:1920px;height:20.5px;background:#444749;border-top:1px solid #535658"></div>
<div class="b" style="left:57px;top:1068px;width:1920px;height:21px;background:#444749;border-top:1px solid #4f4f4f"></div>
<svg class="ic" style="left:87px;top:1050px" width="16" height="16" viewBox="0 0 16 16" ><circle cx="5" cy="4" r="3.5" fill="#e0e0e0" stroke="#8f8f8f" stroke-width="0.8"/><circle cx="5" cy="4" r="1.6" fill="#8f8f8f"/><circle cx="10" cy="8" r="3.6" fill="#f1bd80"/><path d="M6.5 7c0-2 1.5-3.5 3.5-3.5s3.5 1.5 3.5 3.5z" fill="#8f8f8f"/><path d="M5 15.5c0-2 2-3.3 5-3.3s5 1.3 5 3.3z" fill="#47addf"/></svg>
<div class="t" style="left:105px;top:1058px;font-size:12px;font-weight:normal;color:#cccccc;transform:scaleX(0.9416);"><u>6</u>: TODO</div>
<svg class="ic" style="left:173px;top:1050px" width="16" height="16" viewBox="0 0 16 16" ><rect x="0.5" y="0.5" width="9" height="9" fill="#4596d3"/><circle cx="10" cy="10" r="5" fill="#eba843"/><path d="M5 10a5 5 0 0 1 5-5v5z" fill="#36b84b"/></svg>
<div class="t" style="left:191px;top:1058px;font-size:12px;font-weight:normal;color:#cccccc;transform:scaleX(0.9613);"><u>9</u>: Changes</div>
<svg class="ic" style="left:1876px;top:1053px" width="13" height="12" viewBox="0 0 13 12" ><path d="M2 0.5h9a1.5 1.5 0 0 1 1.5 1.5v5.5A1.5 1.5 0 0 1 11 9H8l-1 2.5L6 9H2A1.5 1.5 0 0 1 0.5 7.5V2A1.5 1.5 0 0 1 2 0.5z" fill="#727577"/></svg>
<div class="t" style="left:1893.4px;top:1058.5px;font-size:12px;font-weight:normal;color:#cccccc;transform:scaleX(0.9437);">Event Log</div>
<div class="b" style="left:62px;top:1072px;width:13px;height:14px;border:1px solid #a6a6a6;border-bottom-width:2px;background:#626567"></div>
<div class="t" style="left:1711.7px;top:1079px;font-size:12px;font-weight:normal;color:#cccccc;transform:scaleX(0.9857);">24:72</div>
<div class="t" style="left:1756.4px;top:1079px;font-size:12px;font-weight:normal;color:#cccccc;transform:scaleX(0.8069);">LF</div>
<div class="t" style="left:1788px;top:1079px;font-size:12px;font-weight:normal;color:#cccccc;transform:scaleX(0.9942);">UTF-8</div>
<div class="t" style="left:1841.8px;top:1079px;font-size:12px;font-weight:normal;color:#cccccc;transform:scaleX(0.9851);">Git: master</div>
<svg class="ic" style="left:1773.5px;top:1074px" width="6" height="10" viewBox="0 0 6 10" ><path d="M0 4L3 0.5 6 4zM0 6l3 3.5L6 6z" fill="#aeaeae"/></svg>
<svg class="ic" style="left:1828px;top:1074px" width="6" height="10" viewBox="0 0 6 10" ><path d="M0 4L3 0.5 6 4zM0 6l3 3.5L6 6z" fill="#aeaeae"/></svg>
<svg class="ic" style="left:1916.8px;top:1074px" width="6" height="10" viewBox="0 0 6 10" ><path d="M0 4L3 0.5 6 4zM0 6l3 3.5L6 6z" fill="#aeaeae"/></svg>
<svg class="ic" style="left:1934px;top:1074px" width="11" height="10" viewBox="0 0 11 10" ><path d="M2 4.5V2.8a2 2 0 0 1 4 0" fill="none" stroke="#979797" stroke-width="1.2"/><rect x="3" y="4.5" width="7" height="5" fill="#979797"/><rect x="5.8" y="6" width="1.4" height="2" fill="#444749"/></svg>
<svg class="ic" style="left:1957px;top:1072px" width="13" height="15" viewBox="0 0 13 15" ><path d="M3 5c0-3 1.5-4.5 3.5-4.5S10 2 10 5z" fill="#56595b"/><rect x="1" y="4.5" width="11" height="1.5" fill="#56595b"/><ellipse cx="6.5" cy="8" rx="3.5" ry="3" fill="#56595b"/><path d="M1 15c0-2.5 2.5-4 5.5-4s5.5 1.5 5.5 4z" fill="#56595b"/></svg>
<div class="b" style="left:77px;top:83px;width:1px;height:964.5px;background:#585a5c"></div>
<div class="b" style="left:321px;top:389px;width:321px;height:704px;background:rgba(67,70,72,0.972);box-shadow:0 0 0 0.5px rgba(0,0,0,0.5),3px 2px 5px rgba(0,0,0,0.35),-2px 0 6px rgba(0,0,0,0.25)"></div>
<div class="mi" style="left:345.2px;top:404px;color:#d2d2d2;transform:scaleX(0.9564);transform-origin:0 50%">New</div>
<svg class="ic" style="left:629px;top:398px" width="9" height="11" viewBox="0 0 9 11" ><path d="M0.5 0.5L8.5 5.5L0.5 10.5z" fill="#a3a3a3"/></svg>
<div class="b" style="left:321px;top:419px;width:321px;height:1px;background:#353637"></div>
<svg class="ic" style="left:325px;top:428px" width="15" height="15" viewBox="0 0 15 15" ><path d="M3 1l6.5 9M12 1L5.5 10" stroke="#a1a1a1" stroke-width="1.2"/><circle cx="4" cy="12" r="2.3" fill="none" stroke="#b987d9" stroke-width="1.6"/><circle cx="11" cy="12" r="2.3" fill="none" stroke="#b987d9" stroke-width="1.6"/></svg>
<div class="mi" style="left:345.2px;top:437px;color:#d2d2d2;transform:scaleX(1.0282);transform-origin:0 50%">Cut</div>
<div class="b" style="right:1404px;top:428px;height:16px;display:flex;align-items:center;font-size:15px;color:#d2d2d2;line-height:1"><svg width="12" height="12" viewBox="0 0 12 12" style="margin-left:1px"><path d="M4.2 4.2h3.6v3.6H4.2z M4.2 4.2V2.8a1.6 1.6 0 1 0-1.6 1.4h1.6 M7.8 4.2V2.8a1.6 1.6 0 1 1 1.6 1.4H7.8 M4.2 7.8v1.4a1.6 1.6 0 1 1-1.6-1.4h1.6 M7.8 7.8v1.4a1.6 1.6 0 1 0 1.6-1.4H7.8" fill="none" stroke="#dbdbdb" stroke-width="1.4"/></svg><span style="margin-left:1px">X</span></div>
<svg class="ic" style="left:325px;top:449px" width="15" height="16" viewBox="0 0 15 16" ><path d="M6 1h5l3 3v8H6z" fill="#4d5052" stroke="#aeaeae" stroke-width="1.2"/><path d="M1.5 4h5l2.5 2.5v8.5H1.5z" fill="#4d5052" stroke="#62a9db" stroke-width="1.5"/></svg>
<div class="mi" style="left:345.2px;top:458px;color:#d2d2d2;transform:scaleX(1.0052);transform-origin:0 50%">Copy</div>
<div class="b" style="right:1404px;top:449px;height:16px;display:flex;align-items:center;font-size:15px;color:#d2d2d2;line-height:1"><svg width="12" height="12" viewBox="0 0 12 12" style="margin-left:1px"><path d="M4.2 4.2h3.6v3.6H4.2z M4.2 4.2V2.8a1.6 1.6 0 1 0-1.6 1.4h1.6 M7.8 4.2V2.8a1.6 1.6 0 1 1 1.6 1.4H7.8 M4.2 7.8v1.4a1.6 1.6 0 1 1-1.6-1.4h1.6 M7.8 7.8v1.4a1.6 1.6 0 1 0 1.6-1.4H7.8" fill="none" stroke="#dbdbdb" stroke-width="1.4"/></svg><span style="margin-left:1px">C</span></div>
<div class="mi" style="left:345.2px;top:479px;color:#d2d2d2;transform:scaleX(0.9723);transform-origin:0 50%">Copy Path</div>
<div class="b" style="right:1404px;top:470px;height:16px;display:flex;align-items:center;font-size:15px;color:#d2d2d2;line-height:1"><svg width="12" height="12" viewBox="0 0 12 12" style="margin-left:1px"><path d="M6 0.8L11.2 6.3H8.4V11H3.6V6.3H0.8z" fill="none" stroke="#dbdbdb" stroke-width="1.4" stroke-linejoin="round"/></svg><svg width="12" height="12" viewBox="0 0 12 12" style="margin-left:1px"><path d="M4.2 4.2h3.6v3.6H4.2z M4.2 4.2V2.8a1.6 1.6 0 1 0-1.6 1.4h1.6 M7.8 4.2V2.8a1.6 1.6 0 1 1 1.6 1.4H7.8 M4.2 7.8v1.4a1.6 1.6 0 1 1-1.6-1.4h1.6 M7.8 7.8v1.4a1.6 1.6 0 1 0 1.6-1.4H7.8" fill="none" stroke="#dbdbdb" stroke-width="1.4"/></svg><span style="margin-left:1px">C</span></div>
<div class="mi" style="left:345.2px;top:500px;color:#d2d2d2;transform:scaleX(0.9789);transform-origin:0 50%">Copy Reference</div>
<div class="b" style="right:1404px;top:491px;height:16px;display:flex;align-items:center;font-size:15px;color:#d2d2d2;line-height:1"><svg width="13" height="12" viewBox="0 0 13 12" style="margin-left:1px"><path d="M0.5 2H4.3L8.7 10.5H12.5M7.5 2H12.5" fill="none" stroke="#dbdbdb" stroke-width="1.5"/></svg><svg width="12" height="12" viewBox="0 0 12 12" style="margin-left:1px"><path d="M6 0.8L11.2 6.3H8.4V11H3.6V6.3H0.8z" fill="none" stroke="#dbdbdb" stroke-width="1.4" stroke-linejoin="round"/></svg><svg width="12" height="12" viewBox="0 0 12 12" style="margin-left:1px"><path d="M4.2 4.2h3.6v3.6H4.2z M4.2 4.2V2.8a1.6 1.6 0 1 0-1.6 1.4h1.6 M7.8 4.2V2.8a1.6 1.6 0 1 1 1.6 1.4H7.8 M4.2 7.8v1.4a1.6 1.6 0 1 1-1.6-1.4h1.6 M7.8 7.8v1.4a1.6 1.6 0 1 0 1.6-1.4H7.8" fill="none" stroke="#dbdbdb" stroke-width="1.4"/></svg><span style="margin-left:1px">C</span></div>
<svg class="ic" style="left:325px;top:512px" width="15" height="16" viewBox="0 0 15 16" ><rect x="6" y="2" width="8" height="10" fill="#dca94b"/><rect x="8.5" y="0.5" width="3" height="2.5" fill="#be913c"/><path d="M1.5 6h4.5l2 2v7H1.5z" fill="#4d5052" stroke="#aeaeae" stroke-width="1.4"/></svg>
<div class="mi" style="left:345.2px;top:521px;color:#d2d2d2;transform:scaleX(0.9177);transform-origin:0 50%">Paste</div>
<div class="b" style="right:1404px;top:512px;height:16px;display:flex;align-items:center;font-size:15px;color:#d2d2d2;line-height:1"><svg width="12" height="12" viewBox="0 0 12 12" style="margin-left:1px"><path d="M4.2 4.2h3.6v3.6H4.2z M4.2 4.2V2.8a1.6 1.6 0 1 0-1.6 1.4h1.6 M7.8 4.2V2.8a1.6 1.6 0 1 1 1.6 1.4H7.8 M4.2 7.8v1.4a1.6 1.6 0 1 1-1.6-1.4h1.6 M7.8 7.8v1.4a1.6 1.6 0 1 0 1.6-1.4H7.8" fill="none" stroke="#dbdbdb" stroke-width="1.4"/></svg><span style="margin-left:1px">V</span></div>
<div class="mi" style="left:345.2px;top:542px;color:#d2d2d2;transform:scaleX(0.9814);transform-origin:0 50%">Jump to Source</div>
<div class="b" style="right:1404px;top:533px;height:16px;display:flex;align-items:center;font-size:15px;color:#d2d2d2;line-height:1"><span style="margin-left:1px">F4</span></div>
<div class="b" style="left:321px;top:557px;width:321px;height:1px;background:#353637"></div>
<div class="mi" style="left:345.2px;top:575px;color:#d2d2d2;transform:scaleX(0.9750);transform-origin:0 50%">Find Usages</div>
<div class="b" style="right:1404px;top:566px;height:16px;display:flex;align-items:center;font-size:15px;color:#d2d2d2;line-height:1"><svg width="13" height="12" viewBox="0 0 13 12" style="margin-left:1px"><path d="M0.5 2H4.3L8.7 10.5H12.5M7.5 2H12.5" fill="none" stroke="#dbdbdb" stroke-width="1.5"/></svg><span style="margin-left:1px">F7</span></div>
<div class="mi" style="left:345.2px;top:596px;color:#d2d2d2;transform:scaleX(0.9988);transform-origin:0 50%">Analyze</div>
<svg class="ic" style="left:629px;top:590px" width="9" height="11" viewBox="0 0 9 11" ><path d="M0.5 0.5L8.5 5.5L0.5 10.5z" fill="#a3a3a3"/></svg>
<div class="b" style="left:321px;top:611px;width:321px;height:1px;background:#353637"></div>
<div class="mi" style="left:345.2px;top:629px;color:#d2d2d2;transform:scaleX(0.9931);transform-origin:0 50%">Refactor</div>
<svg class="ic" style="left:629px;top:623px" width="9" height="11" viewBox="0 0 9 11" ><path d="M0.5 0.5L8.5 5.5L0.5 10.5z" fill="#a3a3a3"/></svg>
<div class="b" style="left:321px;top:644px;width:321px;height:1px;background:#353637"></div>
<div class="mi" style="left:345.2px;top:662px;color:#d2d2d2;transform:scaleX(1.0163);transform-origin:0 50%">Add to Favorites</div>
<svg class="ic" style="left:629px;top:656px" width="9" height="11" viewBox="0 0 9 11" ><path d="M0.5 0.5L8.5 5.5L0.5 10.5z" fill="#a3a3a3"/></svg>
<div class="b" style="left:321px;top:677px;width:321px;height:1px;background:#353637"></div>
<div class="mi" style="left:345.2px;top:695px;color:#d2d2d2;transform:scaleX(1.0016);transform-origin:0 50%">Browse Type Hierarchy</div>
<div class="b" style="right:1404px;top:686px;height:16px;display:flex;align-items:center;font-size:15px;color:#d2d2d2;line-height:1"><svg width="11" height="12" viewBox="0 0 11 12" style="margin-left:1px"><path d="M1 6.5L5.5 1.8 10 6.5" fill="none" stroke="#dbdbdb" stroke-width="1.7"/></svg><span style="margin-left:1px">H</span></div>
<div class="mi" style="left:345.2px;top:716px;color:#d2d2d2;transform:scaleX(1.0016);transform-origin:0 50%">Reformat Code...</div>
<div class="b" style="right:1404px;top:707px;height:16px;display:flex;align-items:center;font-size:15px;color:#d2d2d2;line-height:1"><svg width="13" height="12" viewBox="0 0 13 12" style="margin-left:1px"><path d="M0.5 2H4.3L8.7 10.5H12.5M7.5 2H12.5" fill="none" stroke="#dbdbdb" stroke-width="1.5"/></svg><svg width="12" height="12" viewBox="0 0 12 12" style="margin-left:1px"><path d="M4.2 4.2h3.6v3.6H4.2z M4.2 4.2V2.8a1.6 1.6 0 1 0-1.6 1.4h1.6 M7.8 4.2V2.8a1.6 1.6 0 1 1 1.6 1.4H7.8 M4.2 7.8v1.4a1.6 1.6 0 1 1-1.6-1.4h1.6 M7.8 7.8v1.4a1.6 1.6 0 1 0 1.6-1.4H7.8" fill="none" stroke="#dbdbdb" stroke-width="1.4"/></svg><span style="margin-left:1px">L</span></div>
<div class="mi" style="left:345.2px;top:737px;color:#d2d2d2;transform:scaleX(1.0353);transform-origin:0 50%">Optimize Imports...</div>
<div class="b" style="right:1404px;top:728px;height:16px;display:flex;align-items:center;font-size:15px;color:#d2d2d2;line-height:1"><svg width="13" height="12" viewBox="0 0 13 12" style="margin-left:1px"><path d="M0.5 2H4.3L8.7 10.5H12.5M7.5 2H12.5" fill="none" stroke="#dbdbdb" stroke-width="1.5"/></svg><svg width="12" height="12" viewBox="0 0 12 12" style="margin-left:1px"><path d="M4.2 4.2h3.6v3.6H4.2z M4.2 4.2V2.8a1.6 1.6 0 1 0-1.6 1.4h1.6 M7.8 4.2V2.8a1.6 1.6 0 1 1 1.6 1.4H7.8 M4.2 7.8v1.4a1.6 1.6 0 1 1-1.6-1.4h1.6 M7.8 7.8v1.4a1.6 1.6 0 1 0 1.6-1.4H7.8" fill="none" stroke="#dbdbdb" stroke-width="1.4"/></svg><span style="margin-left:1px">O</span></div>
<div class="mi" style="left:345.2px;top:758px;color:#d2d2d2;transform:scaleX(0.9720);transform-origin:0 50%">Delete...</div>
<div class="b" style="right:1404px;top:749px;height:16px;display:flex;align-items:center;font-size:15px;color:#d2d2d2;line-height:1"><svg width="16" height="12" viewBox="0 0 16 12"><path d="M1 1h9.5l4.5 5-4.5 5H1z" fill="none" stroke="#dbdbdb" stroke-width="1.3"/><path d="M4.5 3.5l5 5M9.5 3.5l-5 5" stroke="#dbdbdb" stroke-width="1.3"/></svg></div>
<div class="b" style="left:321px;top:773px;width:321px;height:1px;background:#353637"></div>
<div class="mi" style="left:345.2px;top:791px;color:#d2d2d2;transform:scaleX(1.0322);transform-origin:0 50%">Make Module 'h2o-samples'</div>
<div class="mi" style="left:345.2px;top:812px;color:#d2d2d2;transform:scaleX(0.9981);transform-origin:0 50%">Compile 'LoadDatasets.java'</div>
<div class="b" style="right:1404px;top:803px;height:16px;display:flex;align-items:center;font-size:15px;color:#d2d2d2;line-height:1"><svg width="12" height="12" viewBox="0 0 12 12" style="margin-left:1px"><path d="M6 0.8L11.2 6.3H8.4V11H3.6V6.3H0.8z" fill="none" stroke="#dbdbdb" stroke-width="1.4" stroke-linejoin="round"/></svg><svg width="12" height="12" viewBox="0 0 12 12" style="margin-left:1px"><path d="M4.2 4.2h3.6v3.6H4.2z M4.2 4.2V2.8a1.6 1.6 0 1 0-1.6 1.4h1.6 M7.8 4.2V2.8a1.6 1.6 0 1 1 1.6 1.4H7.8 M4.2 7.8v1.4a1.6 1.6 0 1 1-1.6-1.4h1.6 M7.8 7.8v1.4a1.6 1.6 0 1 0 1.6-1.4H7.8" fill="none" stroke="#dbdbdb" stroke-width="1.4"/></svg><span style="margin-left:1px">F9</span></div>
<svg class="ic" style="left:324px;top:824px" width="16" height="15" viewBox="0 0 16 15" ><rect x="0.5" y="0.5" width="11" height="8" fill="none" stroke="#919191"/><rect x="3.5" y="4.5" width="12" height="9" fill="#a5d5f1" stroke="#579ed0" stroke-width="1.4"/></svg>
<div class="mi" style="left:345.2px;top:833px;color:#d2d2d2;transform:scaleX(0.9814);transform-origin:0 50%">Save 'LoadDatasets.main()'</div>
<div class="b" style="left:343px;top:843px;width:299px;height:21px;background:#356FCF"></div>
<svg class="ic" style="left:327px;top:845px" width="13" height="14" viewBox="0 0 13 14" ><path d="M1 0.5L12 7 1 13.5z" fill="#44b852"/></svg>
<div class="mi" style="left:345.2px;top:854px;color:#ffffff;transform:scaleX(0.9941);transform-origin:0 50%">Run 'LoadDatasets.main()'</div>
<div class="b" style="right:1404px;top:845px;height:16px;display:flex;align-items:center;font-size:15px;color:#ffffff;line-height:1"><svg width="11" height="12" viewBox="0 0 11 12" style="margin-left:1px"><path d="M1 6.5L5.5 1.8 10 6.5" fill="none" stroke="#ffffff" stroke-width="1.7"/></svg><svg width="12" height="12" viewBox="0 0 12 12" style="margin-left:1px"><path d="M6 0.8L11.2 6.3H8.4V11H3.6V6.3H0.8z" fill="none" stroke="#ffffff" stroke-width="1.4" stroke-linejoin="round"/></svg><span style="margin-left:1px">F10</span></div>
<svg class="ic" style="left:325px;top:866px" width="16" height="15" viewBox="0 0 16 15" ><path d="M3 1.5L4.5 3.5M7 1v2.2M3 13.5L4.5 11.5M7 14v-2.2M11.5 4.2c1.5-0.8 2.8-0.6 3.5 0.3M11.5 10.8c1.5 0.8 2.8 0.6 3.5-0.3M12 7.5h2.5" stroke="#b9b9b9" stroke-width="0.9" fill="none"/><ellipse cx="6.2" cy="7.5" rx="5.6" ry="5.2" fill="#3bb750"/><path d="M0.8 7.5h10" stroke="#31a142" stroke-width="0.7"/><ellipse cx="11" cy="7.5" rx="1.7" ry="3.2" fill="#c8c8c8"/></svg>
<div class="mi" style="left:345.2px;top:875px;color:#d2d2d2;transform:scaleX(1.0024);transform-origin:0 50%">Debug 'LoadDatasets.main()'</div>
<div class="b" style="right:1404px;top:866px;height:16px;display:flex;align-items:center;font-size:15px;color:#d2d2d2;line-height:1"><svg width="11" height="12" viewBox="0 0 11 12" style="margin-left:1px"><path d="M1 6.5L5.5 1.8 10 6.5" fill="none" stroke="#dbdbdb" stroke-width="1.7"/></svg><svg width="12" height="12" viewBox="0 0 12 12" style="margin-left:1px"><path d="M6 0.8L11.2 6.3H8.4V11H3.6V6.3H0.8z" fill="none" stroke="#dbdbdb" stroke-width="1.4" stroke-linejoin="round"/></svg><span style="margin-left:1px">F9</span></div>
<svg class="ic" style="left:325px;top:887px" width="16" height="14" viewBox="0 0 16 14" ><circle cx="10" cy="7" r="5.5" fill="#737373"/><path d="M6 3h2v2H6zM10 3h2v2h-2zM8 5h2v2H8zM12 5h2v2h-2zM6 7h2v2H6zM10 7h2v2h-2zM8 9h2v2H8zM12 9h2v2h-2z" fill="#a1a1a1"/><path d="M0.5 2.5L7 7l-6.5 4.5z" fill="#44b852"/></svg>
<div class="mi" style="left:345.2px;top:896px;color:#d2d2d2;transform:scaleX(1.0022);transform-origin:0 50%">Run 'LoadDatasets.main()' with Coverage</div>
<div class="b" style="left:321px;top:911px;width:321px;height:1px;background:#353637"></div>
<div class="mi" style="left:345.2px;top:929px;color:#d2d2d2;transform:scaleX(1.0058);transform-origin:0 50%">Local History</div>
<svg class="ic" style="left:629px;top:923px" width="9" height="11" viewBox="0 0 9 11" ><path d="M0.5 0.5L8.5 5.5L0.5 10.5z" fill="#a3a3a3"/></svg>
<div class="mi" style="left:345.2px;top:950px;color:#d2d2d2;transform:scaleX(0.9913);transform-origin:0 50%">Git</div>
<svg class="ic" style="left:629px;top:944px" width="9" height="11" viewBox="0 0 9 11" ><path d="M0.5 0.5L8.5 5.5L0.5 10.5z" fill="#a3a3a3"/></svg>
<svg class="ic" style="left:325px;top:962px" width="15" height="15" viewBox="0 0 15 15" ><path d="M12.5 5.5A5.5 5.5 0 0 0 2.8 3.5" fill="none" stroke="#52a8df" stroke-width="2.4"/><path d="M0.8 1.2l4.5 0.8-2.8 3.5z" fill="#52a8df"/><path d="M2 9.5A5.5 5.5 0 0 0 11.7 11.5" fill="none" stroke="#52a8df" stroke-width="2.4"/><path d="M13.7 13.8l-4.5-0.8 2.8-3.5z" fill="#52a8df"/></svg>
<div class="mi" style="left:345.2px;top:971px;color:#d2d2d2;transform:scaleX(0.9959);transform-origin:0 50%">Synchronize 'LoadDatasets.java'</div>
<div class="b" style="left:321px;top:986px;width:321px;height:1px;background:#353637"></div>
<div class="mi" style="left:345.2px;top:1004px;color:#d2d2d2;transform:scaleX(0.9943);transform-origin:0 50%">Reveal in Finder</div>
<div class="b" style="left:321px;top:1019px;width:321px;height:1px;background:#353637"></div>
<svg class="ic" style="left:325px;top:1028px" width="15" height="15" viewBox="0 0 15 15" ><rect x="9" y="0.5" width="5" height="5" fill="#dca94b"/><rect x="0.5" y="9" width="5" height="5" fill="#dca94b"/><rect x="0.5" y="0.5" width="2.5" height="2.5" fill="#44b852"/><rect x="12" y="12" width="2.5" height="2.5" fill="#44b852"/><path d="M1.8 3v6M6 12.5h6M4 10.5l6-6" stroke="#b0b0b0" stroke-width="0.8" stroke-dasharray="1 1"/></svg>
<div class="mi" style="left:345.2px;top:1037px;color:#d2d2d2;transform:scaleX(1.0018);transform-origin:0 50%">Diagrams</div>
<svg class="ic" style="left:629px;top:1031px" width="9" height="11" viewBox="0 0 9 11" ><path d="M0.5 0.5L8.5 5.5L0.5 10.5z" fill="#a3a3a3"/></svg>
<svg class="ic" style="left:325px;top:1049px" width="15" height="15" viewBox="0 0 15 15" ><circle cx="7.5" cy="7.5" r="6.7" fill="#363738" stroke="#b6b6b6" stroke-width="1.2"/><path d="M3.5 8.5c0-2 0.6-3.5 1-4.5l1.6 1h2.8l1.6-1c0.4 1 1 2.5 1 4.5 0 2-1.6 3-4 3s-4-1-4-3z" fill="#cccccc"/><ellipse cx="6" cy="8.3" rx="0.8" ry="1" fill="#363738"/><ellipse cx="9" cy="8.3" rx="0.8" ry="1" fill="#363738"/></svg>
<div class="mi" style="left:345.2px;top:1058px;color:#d2d2d2;transform:scaleX(1.0083);transform-origin:0 50%">Open on GitHub</div>
<svg class="ic" style="left:325px;top:1070px" width="15" height="15" viewBox="0 0 15 15" ><circle cx="7.5" cy="7.5" r="6.7" fill="#363738" stroke="#b6b6b6" stroke-width="1.2"/><path d="M3.5 8.5c0-2 0.6-3.5 1-4.5l1.6 1h2.8l1.6-1c0.4 1 1 2.5 1 4.5 0 2-1.6 3-4 3s-4-1-4-3z" fill="#cccccc"/><ellipse cx="6" cy="8.3" rx="0.8" ry="1" fill="#363738"/><ellipse cx="9" cy="8.3" rx="0.8" ry="1" fill="#363738"/></svg>
<div class="mi" style="left:345.2px;top:1079px;color:#d2d2d2;transform:scaleX(0.9778);transform-origin:0 50%">Create Gist...</div>
</body></html>
